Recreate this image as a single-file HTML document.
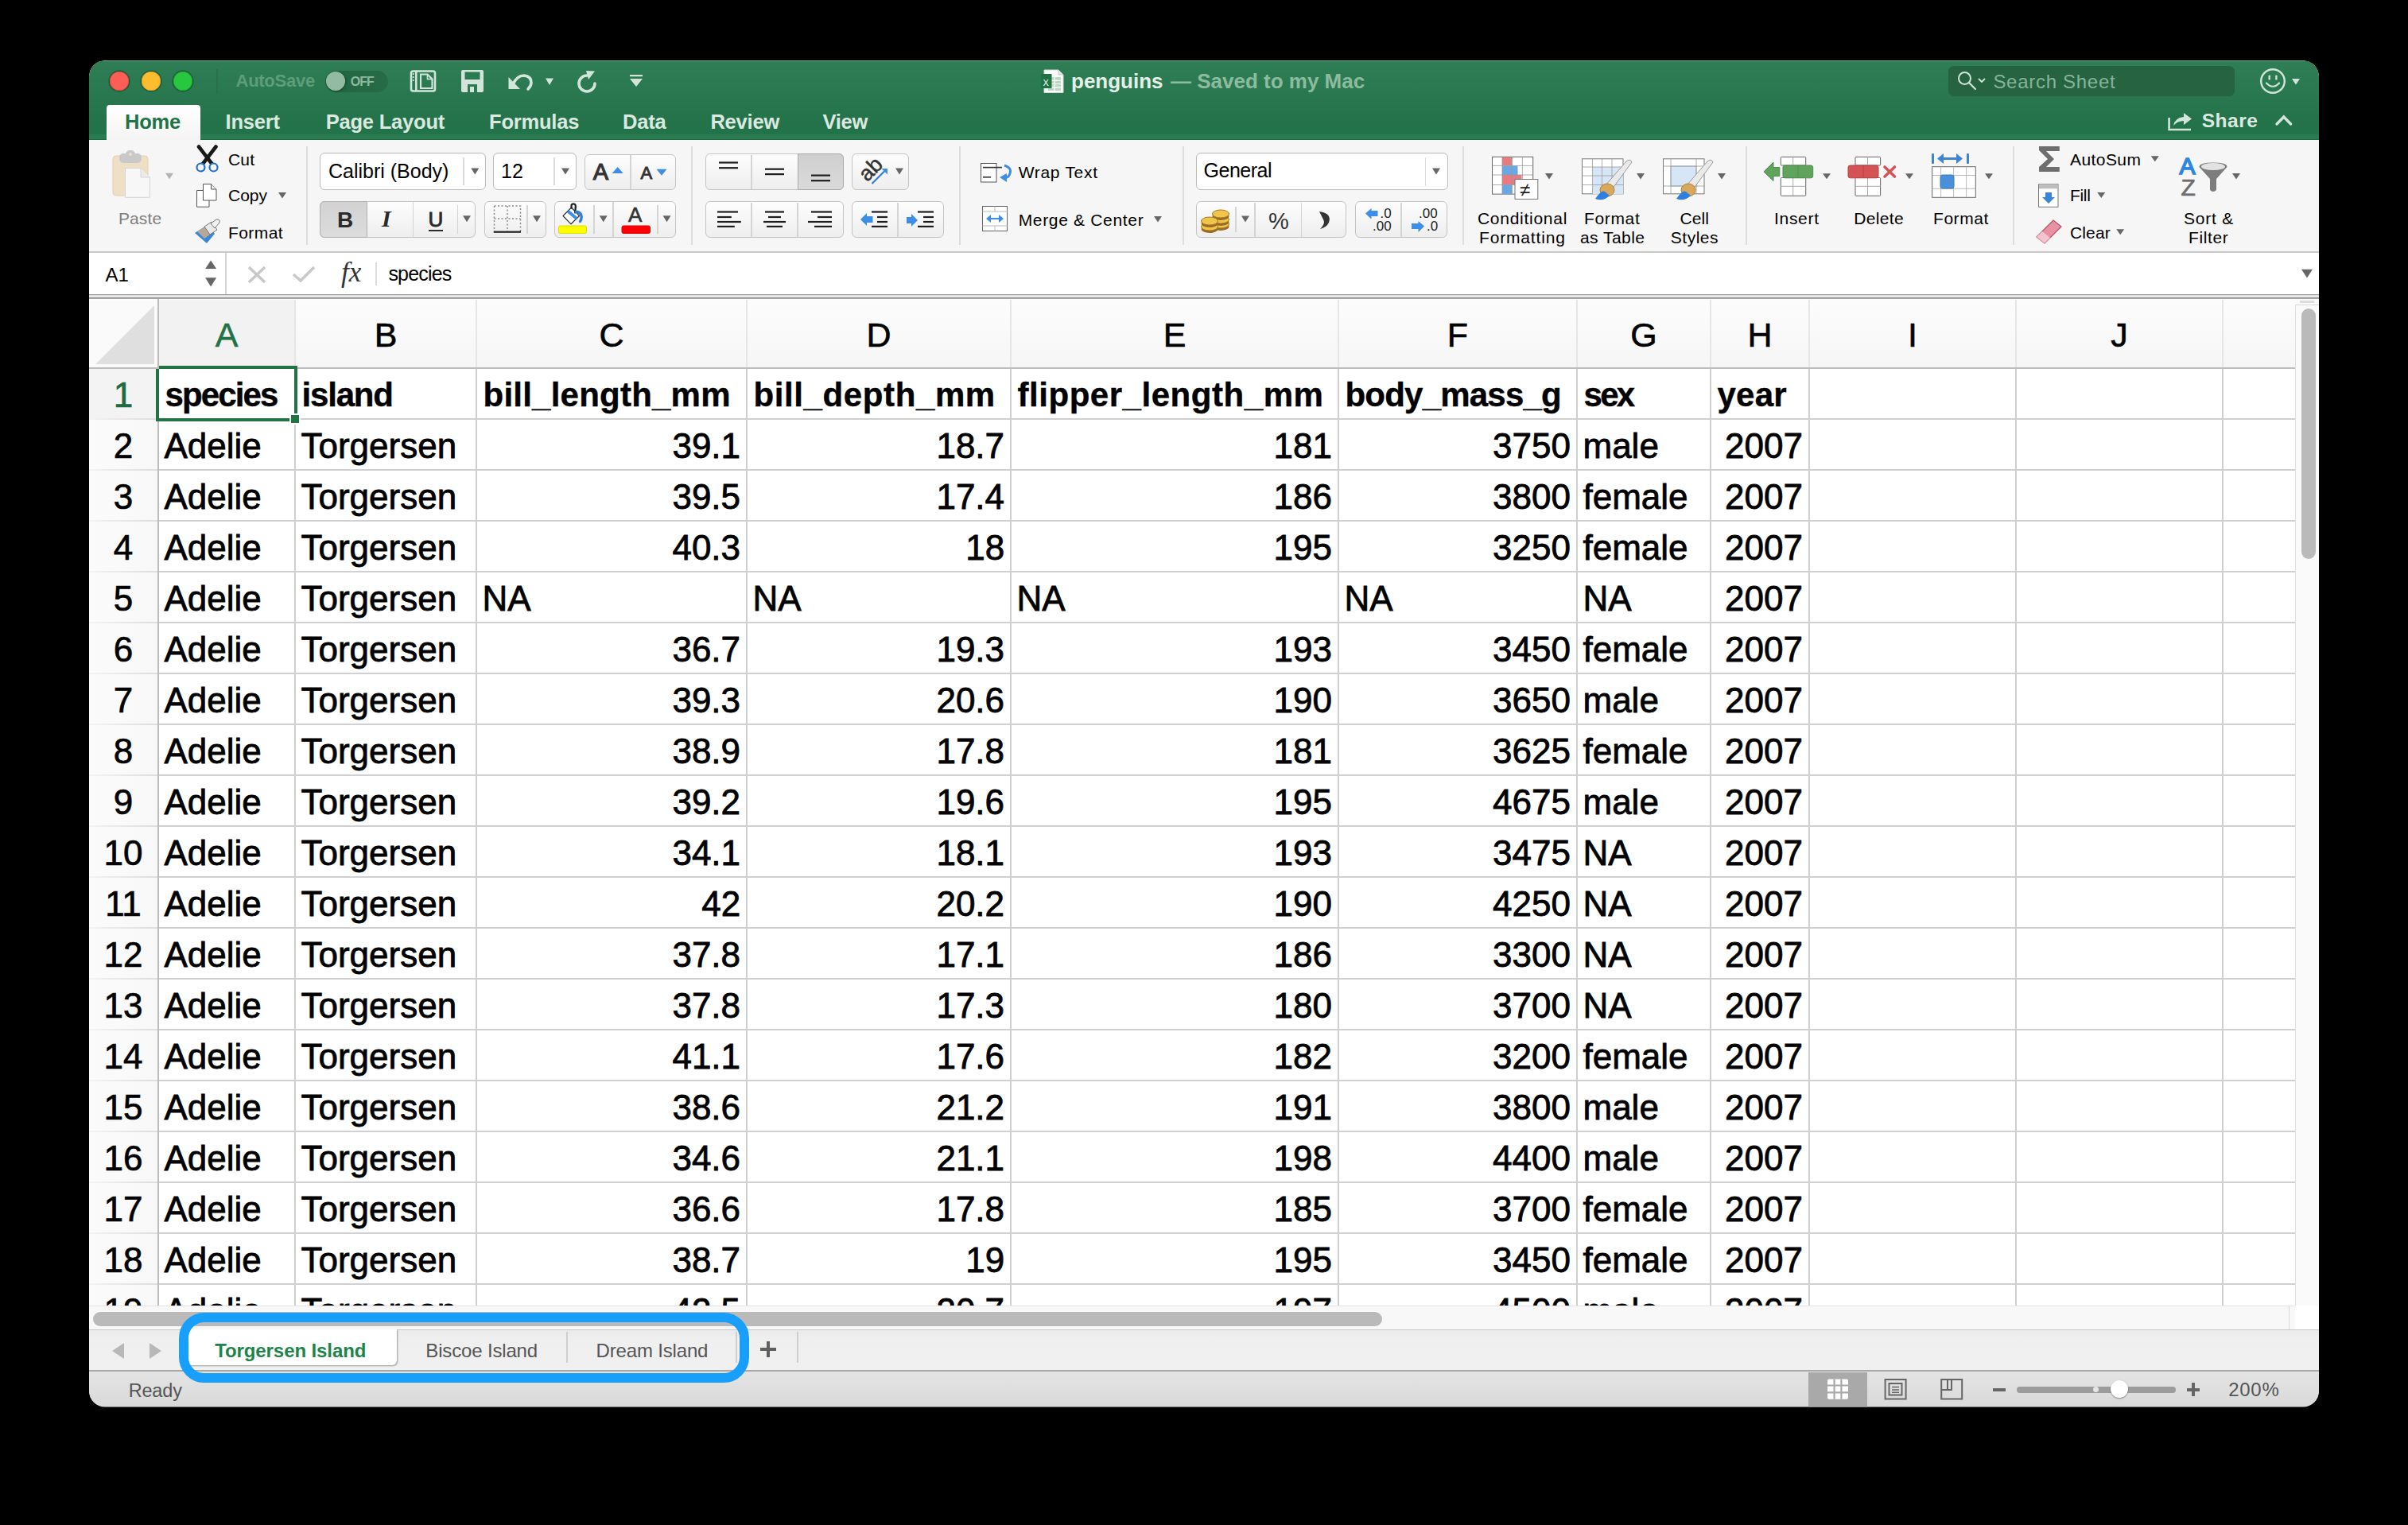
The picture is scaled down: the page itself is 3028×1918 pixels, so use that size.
<!DOCTYPE html>
<html><head><meta charset="utf-8"><style>
html,body{margin:0;padding:0;background:#000;}
body{width:3028px;height:1918px;position:relative;overflow:hidden;font-family:"Liberation Sans",sans-serif;}
#page{position:absolute;left:0;top:0;width:3028px;height:1918px;clip-path:inset(76px 112px 148.5px 112px round 20px);}
#page div,#page svg{position:absolute;white-space:nowrap;}
</style></head><body><div id="page">
<div id="win" style="left:112px;top:76px;width:2804px;height:1693px;border-radius:20px;overflow:hidden;background:#fff;"></div>
<div style="left:112px;top:76px;width:2804px;height:100px;background:linear-gradient(#2f7e55,#2a7850 40%,#24734a 70%,#22724a);border-radius:20px 20px 0 0;"></div>
<div style="left:112px;top:169px;width:2804px;height:6px;background:#2b7b50;"></div>
<div style="left:130px;top:76px;width:2768px;height:1px;background:rgba(170,215,190,0.55);"></div>
<div style="left:112px;top:175px;width:2804px;height:1px;background:#1f6a42;"></div>
<div style="left:138px;top:90px;width:24px;height:24px;border-radius:50%;background:#fd5f57;box-shadow:0 0 0 0.8px #d9443c inset, 0 0 0 1.6px rgba(20,70,45,0.6);"></div>
<div style="left:178px;top:90px;width:24px;height:24px;border-radius:50%;background:#febc2e;box-shadow:0 0 0 0.8px #d9a020 inset, 0 0 0 1.6px rgba(20,70,45,0.6);"></div>
<div style="left:218px;top:90px;width:24px;height:24px;border-radius:50%;background:#27c83f;box-shadow:0 0 0 0.8px #1ea532 inset, 0 0 0 1.6px rgba(20,70,45,0.6);"></div>
<div style="left:272px;top:87px;width:2px;height:31px;background:#2a6f49;"></div>
<div style="top:90.09px;font-size:22px;line-height:24.57px;color:#5f9d7a;font-weight:700;letter-spacing:-0.26px;left:296.50px;">AutoSave</div>
<div style="left:408.5px;top:88.5px;width:79.5px;height:27px;border-radius:14px;background:linear-gradient(90deg,#22643f,#276b47);"></div>
<div style="left:409.6px;top:89.7px;width:24.4px;height:24.4px;border-radius:50%;background:#93bba3;box-shadow:1px 1px 3px rgba(0,0,0,0.3);"></div>
<div style="top:93.62px;font-size:16px;line-height:17.87px;color:#8fb9a0;font-weight:700;letter-spacing:-0.9px;left:440.70px;">OFF</div>
<div style="left:134px;top:132px;width:118px;height:44px;border-radius:4px 4px 0 0;background:linear-gradient(#ffffff,#f4f4f4);"></div>
<div style="top:138.92px;font-size:25.5px;line-height:28.48px;color:#217346;font-weight:700;letter-spacing:-0.2px;left:157.00px;">Home</div>
<div style="top:138.92px;font-size:25.5px;line-height:28.48px;color:#dce9e1;font-weight:700;letter-spacing:-0.2px;left:283.50px;">Insert</div>
<div style="top:138.92px;font-size:25.5px;line-height:28.48px;color:#dce9e1;font-weight:700;letter-spacing:-0.2px;left:409.70px;">Page Layout</div>
<div style="top:138.92px;font-size:25.5px;line-height:28.48px;color:#dce9e1;font-weight:700;letter-spacing:-0.2px;left:615.00px;">Formulas</div>
<div style="top:138.92px;font-size:25.5px;line-height:28.48px;color:#dce9e1;font-weight:700;letter-spacing:-0.2px;left:783.00px;">Data</div>
<div style="top:138.92px;font-size:25.5px;line-height:28.48px;color:#dce9e1;font-weight:700;letter-spacing:-0.2px;left:893.40px;">Review</div>
<div style="top:138.92px;font-size:25.5px;line-height:28.48px;color:#dce9e1;font-weight:700;letter-spacing:-0.2px;left:1034.40px;">View</div>
<div style="top:88.47px;font-size:26px;line-height:29.04px;color:#e3efe8;font-weight:700;left:1347.00px;">penguins</div>
<div style="top:88.47px;font-size:26px;line-height:29.04px;color:#8dbb9f;font-weight:700;left:1472.00px;">— Saved to my Mac</div>
<div style="left:2450px;top:83px;width:360px;height:37.5px;border-radius:7px;background:#256341;"></div>
<div style="top:90.08px;font-size:24px;line-height:26.81px;color:#86b49a;font-weight:400;letter-spacing:0.71px;left:2506.40px;">Search Sheet</div>
<div style="top:138.23px;font-size:24.5px;line-height:27.37px;color:#dce9e1;font-weight:700;letter-spacing:0.55px;left:2768.70px;">Share</div>
<div style="left:112px;top:176px;width:2804px;height:140px;background:#f6f6f6;"></div>
<div style="left:112px;top:316px;width:2804px;height:2px;background:#c9c9c9;"></div>
<div style="left:384.5px;top:184px;width:2.0px;height:123.5px;background:#dddddd;"></div>
<div style="left:868.5px;top:184px;width:2.0px;height:123.5px;background:#dddddd;"></div>
<div style="left:1205.5px;top:184px;width:2.0px;height:123.5px;background:#dddddd;"></div>
<div style="left:1486.5px;top:184px;width:2.0px;height:123.5px;background:#dddddd;"></div>
<div style="left:1838.5px;top:184px;width:2.0px;height:123.5px;background:#dddddd;"></div>
<div style="left:2194.5px;top:184px;width:2.0px;height:123.5px;background:#dddddd;"></div>
<div style="left:2530.5px;top:184px;width:2.0px;height:123.5px;background:#dddddd;"></div>
<div style="left:112px;top:318px;width:2804px;height:52px;background:#ffffff;"></div>
<div style="left:283px;top:318px;width:2px;height:52px;background:#d4d4d4;"></div>
<div style="left:112px;top:370px;width:2804px;height:1px;background:#a0a0a0;"></div>
<div style="left:112px;top:371px;width:2804px;height:1px;background:#d8d8d8;"></div>
<div style="left:112px;top:373px;width:2804px;height:1px;background:#d0d0d0;"></div>
<div style="left:112px;top:374px;width:2804px;height:2px;background:#a4a4a4;"></div>
<div style="top:333.28px;font-size:24px;line-height:26.81px;color:#000;font-weight:400;left:132.50px;">A1</div>
<div style="top:331.18px;font-size:25px;line-height:27.93px;color:#000;font-weight:400;letter-spacing:-0.81px;left:488.40px;">species</div>
<div style="left:112px;top:376px;width:2774px;height:86px;background:linear-gradient(#fcfcfc,#f6f6f6);"></div>
<div style="left:200px;top:377px;width:170px;height:85px;background:#f2f2f2;"></div>
<div style="left:112px;top:462px;width:2774px;height:2px;background:#bcbcbc;"></div>
<div style="left:112px;top:377px;width:86px;height:85px;background:#fafafa;"></div>
<svg style="left:120px;top:384px;" width="75" height="75"><polygon points="0,74 74,0 74,74" fill="#dfdfdf"/></svg>
<div style="left:198px;top:376px;width:2px;height:88px;background:#bcbcbc;"></div>
<div style="left:370px;top:377px;width:2px;height:85px;background:#e6e6e6;"></div>
<div style="left:598px;top:377px;width:2px;height:85px;background:#e6e6e6;"></div>
<div style="left:938px;top:377px;width:2px;height:85px;background:#e6e6e6;"></div>
<div style="left:1270px;top:377px;width:2px;height:85px;background:#e6e6e6;"></div>
<div style="left:1682px;top:377px;width:2px;height:85px;background:#e6e6e6;"></div>
<div style="left:1982px;top:377px;width:2px;height:85px;background:#e6e6e6;"></div>
<div style="left:2150px;top:377px;width:2px;height:85px;background:#e6e6e6;"></div>
<div style="left:2274px;top:377px;width:2px;height:85px;background:#e6e6e6;"></div>
<div style="left:2534px;top:377px;width:2px;height:85px;background:#e6e6e6;"></div>
<div style="left:2794px;top:377px;width:2px;height:85px;background:#e6e6e6;"></div>
<div style="top:396.58px;font-size:43px;line-height:48.03px;color:#217346;font-weight:400;left:-715.00px;width:2000px;text-align:center;-webkit-text-stroke:0.6px #217346;">A</div>
<div style="top:396.58px;font-size:43px;line-height:48.03px;color:#000;font-weight:400;left:-515.00px;width:2000px;text-align:center;-webkit-text-stroke:0.6px #000;">B</div>
<div style="top:396.58px;font-size:43px;line-height:48.03px;color:#000;font-weight:400;left:-231.00px;width:2000px;text-align:center;-webkit-text-stroke:0.6px #000;">C</div>
<div style="top:396.58px;font-size:43px;line-height:48.03px;color:#000;font-weight:400;left:105.00px;width:2000px;text-align:center;-webkit-text-stroke:0.6px #000;">D</div>
<div style="top:396.58px;font-size:43px;line-height:48.03px;color:#000;font-weight:400;left:477.00px;width:2000px;text-align:center;-webkit-text-stroke:0.6px #000;">E</div>
<div style="top:396.58px;font-size:43px;line-height:48.03px;color:#000;font-weight:400;left:833.00px;width:2000px;text-align:center;-webkit-text-stroke:0.6px #000;">F</div>
<div style="top:396.58px;font-size:43px;line-height:48.03px;color:#000;font-weight:400;left:1067.00px;width:2000px;text-align:center;-webkit-text-stroke:0.6px #000;">G</div>
<div style="top:396.58px;font-size:43px;line-height:48.03px;color:#000;font-weight:400;left:1213.00px;width:2000px;text-align:center;-webkit-text-stroke:0.6px #000;">H</div>
<div style="top:396.58px;font-size:43px;line-height:48.03px;color:#000;font-weight:400;left:1405.00px;width:2000px;text-align:center;-webkit-text-stroke:0.6px #000;">I</div>
<div style="top:396.58px;font-size:43px;line-height:48.03px;color:#000;font-weight:400;left:1665.00px;width:2000px;text-align:center;-webkit-text-stroke:0.6px #000;">J</div>
<div style="left:112px;top:464px;width:86px;height:1178px;background:linear-gradient(90deg,#fbfbfb,#f8f8f8);"></div>
<div style="left:198px;top:464px;width:2px;height:1178px;background:#bcbcbc;"></div>
<div style="left:112px;top:464px;width:86px;height:62px;background:#f3f3f3;"></div>
<div style="left:200px;top:464px;width:2686px;height:1178px;background:#ffffff;"></div>
<div style="left:370px;top:464px;width:2px;height:1178px;background:#d0d0d0;"></div>
<div style="left:598px;top:464px;width:2px;height:1178px;background:#d0d0d0;"></div>
<div style="left:938px;top:464px;width:2px;height:1178px;background:#d0d0d0;"></div>
<div style="left:1270px;top:464px;width:2px;height:1178px;background:#d0d0d0;"></div>
<div style="left:1682px;top:464px;width:2px;height:1178px;background:#d0d0d0;"></div>
<div style="left:1982px;top:464px;width:2px;height:1178px;background:#d0d0d0;"></div>
<div style="left:2150px;top:464px;width:2px;height:1178px;background:#d0d0d0;"></div>
<div style="left:2274px;top:464px;width:2px;height:1178px;background:#d0d0d0;"></div>
<div style="left:2534px;top:464px;width:2px;height:1178px;background:#d0d0d0;"></div>
<div style="left:2794px;top:464px;width:2px;height:1178px;background:#d0d0d0;"></div>
<div style="left:200px;top:526px;width:2686px;height:2px;background:#d0d0d0;"></div>
<div style="left:112px;top:526px;width:86px;height:2px;background:linear-gradient(90deg,rgba(225,225,225,0.3),#dddddd);"></div>
<div style="left:200px;top:590px;width:2686px;height:2px;background:#d0d0d0;"></div>
<div style="left:112px;top:590px;width:86px;height:2px;background:linear-gradient(90deg,rgba(225,225,225,0.3),#dddddd);"></div>
<div style="left:200px;top:654px;width:2686px;height:2px;background:#d0d0d0;"></div>
<div style="left:112px;top:654px;width:86px;height:2px;background:linear-gradient(90deg,rgba(225,225,225,0.3),#dddddd);"></div>
<div style="left:200px;top:718px;width:2686px;height:2px;background:#d0d0d0;"></div>
<div style="left:112px;top:718px;width:86px;height:2px;background:linear-gradient(90deg,rgba(225,225,225,0.3),#dddddd);"></div>
<div style="left:200px;top:782px;width:2686px;height:2px;background:#d0d0d0;"></div>
<div style="left:112px;top:782px;width:86px;height:2px;background:linear-gradient(90deg,rgba(225,225,225,0.3),#dddddd);"></div>
<div style="left:200px;top:846px;width:2686px;height:2px;background:#d0d0d0;"></div>
<div style="left:112px;top:846px;width:86px;height:2px;background:linear-gradient(90deg,rgba(225,225,225,0.3),#dddddd);"></div>
<div style="left:200px;top:910px;width:2686px;height:2px;background:#d0d0d0;"></div>
<div style="left:112px;top:910px;width:86px;height:2px;background:linear-gradient(90deg,rgba(225,225,225,0.3),#dddddd);"></div>
<div style="left:200px;top:974px;width:2686px;height:2px;background:#d0d0d0;"></div>
<div style="left:112px;top:974px;width:86px;height:2px;background:linear-gradient(90deg,rgba(225,225,225,0.3),#dddddd);"></div>
<div style="left:200px;top:1038px;width:2686px;height:2px;background:#d0d0d0;"></div>
<div style="left:112px;top:1038px;width:86px;height:2px;background:linear-gradient(90deg,rgba(225,225,225,0.3),#dddddd);"></div>
<div style="left:200px;top:1102px;width:2686px;height:2px;background:#d0d0d0;"></div>
<div style="left:112px;top:1102px;width:86px;height:2px;background:linear-gradient(90deg,rgba(225,225,225,0.3),#dddddd);"></div>
<div style="left:200px;top:1166px;width:2686px;height:2px;background:#d0d0d0;"></div>
<div style="left:112px;top:1166px;width:86px;height:2px;background:linear-gradient(90deg,rgba(225,225,225,0.3),#dddddd);"></div>
<div style="left:200px;top:1230px;width:2686px;height:2px;background:#d0d0d0;"></div>
<div style="left:112px;top:1230px;width:86px;height:2px;background:linear-gradient(90deg,rgba(225,225,225,0.3),#dddddd);"></div>
<div style="left:200px;top:1294px;width:2686px;height:2px;background:#d0d0d0;"></div>
<div style="left:112px;top:1294px;width:86px;height:2px;background:linear-gradient(90deg,rgba(225,225,225,0.3),#dddddd);"></div>
<div style="left:200px;top:1358px;width:2686px;height:2px;background:#d0d0d0;"></div>
<div style="left:112px;top:1358px;width:86px;height:2px;background:linear-gradient(90deg,rgba(225,225,225,0.3),#dddddd);"></div>
<div style="left:200px;top:1422px;width:2686px;height:2px;background:#d0d0d0;"></div>
<div style="left:112px;top:1422px;width:86px;height:2px;background:linear-gradient(90deg,rgba(225,225,225,0.3),#dddddd);"></div>
<div style="left:200px;top:1486px;width:2686px;height:2px;background:#d0d0d0;"></div>
<div style="left:112px;top:1486px;width:86px;height:2px;background:linear-gradient(90deg,rgba(225,225,225,0.3),#dddddd);"></div>
<div style="left:200px;top:1550px;width:2686px;height:2px;background:#d0d0d0;"></div>
<div style="left:112px;top:1550px;width:86px;height:2px;background:linear-gradient(90deg,rgba(225,225,225,0.3),#dddddd);"></div>
<div style="left:200px;top:1614px;width:2686px;height:2px;background:#d0d0d0;"></div>
<div style="left:112px;top:1614px;width:86px;height:2px;background:linear-gradient(90deg,rgba(225,225,225,0.3),#dddddd);"></div>
<div style="left:112px;top:464px;width:2774px;height:1178px;overflow:hidden;">
<div style="top:8.18px;font-size:44px;line-height:49.15px;color:#1e6b40;font-weight:400;left:-957.00px;width:2000px;text-align:center;-webkit-text-stroke:0.7px #1e6b40;">1</div>
<div style="top:9.99px;font-size:42px;line-height:46.91px;color:#000;font-weight:700;letter-spacing:-1.87px;left:95.50px;-webkit-text-stroke:0.4px #000;">species</div>
<div style="top:9.99px;font-size:42px;line-height:46.91px;color:#000;font-weight:700;letter-spacing:-1.18px;left:267.50px;-webkit-text-stroke:0.4px #000;">island</div>
<div style="top:9.99px;font-size:42px;line-height:46.91px;color:#000;font-weight:700;letter-spacing:0.23px;left:495.50px;-webkit-text-stroke:0.4px #000;">bill_length_mm</div>
<div style="top:9.99px;font-size:42px;line-height:46.91px;color:#000;font-weight:700;letter-spacing:0.61px;left:835.50px;-webkit-text-stroke:0.4px #000;">bill_depth_mm</div>
<div style="top:9.99px;font-size:42px;line-height:46.91px;color:#000;font-weight:700;letter-spacing:0.54px;left:1167.50px;-webkit-text-stroke:0.4px #000;">flipper_length_mm</div>
<div style="top:9.99px;font-size:42px;line-height:46.91px;color:#000;font-weight:700;letter-spacing:-0.79px;left:1579.50px;-webkit-text-stroke:0.4px #000;">body_mass_g</div>
<div style="top:9.99px;font-size:42px;line-height:46.91px;color:#000;font-weight:700;letter-spacing:-2.72px;left:1879.50px;-webkit-text-stroke:0.4px #000;">sex</div>
<div style="top:9.99px;font-size:42px;line-height:46.91px;color:#000;font-weight:700;letter-spacing:0.23px;left:2047.50px;-webkit-text-stroke:0.4px #000;">year</div>
<div style="top:72.18px;font-size:44px;line-height:49.15px;color:#000;font-weight:400;left:-957.00px;width:2000px;text-align:center;-webkit-text-stroke:0.7px #000;">2</div>
<div style="top:72.18px;font-size:44px;line-height:49.15px;color:#000;font-weight:400;left:94.50px;-webkit-text-stroke:0.8px #000;">Adelie</div>
<div style="top:72.18px;font-size:44px;line-height:49.15px;color:#000;font-weight:400;left:266.50px;-webkit-text-stroke:0.8px #000;">Torgersen</div>
<div style="top:72.18px;font-size:44px;line-height:49.15px;color:#000;font-weight:400;right:1954.94px;text-align:right;-webkit-text-stroke:0.8px #000;">39.1</div>
<div style="top:72.18px;font-size:44px;line-height:49.15px;color:#000;font-weight:400;right:1622.94px;text-align:right;-webkit-text-stroke:0.8px #000;">18.7</div>
<div style="top:72.18px;font-size:44px;line-height:49.15px;color:#000;font-weight:400;right:1211.07px;text-align:right;-webkit-text-stroke:0.8px #000;">181</div>
<div style="top:72.18px;font-size:44px;line-height:49.15px;color:#000;font-weight:400;right:911.01px;text-align:right;-webkit-text-stroke:0.8px #000;">3750</div>
<div style="top:72.18px;font-size:44px;line-height:49.15px;color:#000;font-weight:400;left:1878.50px;-webkit-text-stroke:0.8px #000;">male</div>
<div style="top:72.18px;font-size:44px;line-height:49.15px;color:#000;font-weight:400;right:619.01px;text-align:right;-webkit-text-stroke:0.8px #000;">2007</div>
<div style="top:136.18px;font-size:44px;line-height:49.15px;color:#000;font-weight:400;left:-957.00px;width:2000px;text-align:center;-webkit-text-stroke:0.7px #000;">3</div>
<div style="top:136.18px;font-size:44px;line-height:49.15px;color:#000;font-weight:400;left:94.50px;-webkit-text-stroke:0.8px #000;">Adelie</div>
<div style="top:136.18px;font-size:44px;line-height:49.15px;color:#000;font-weight:400;left:266.50px;-webkit-text-stroke:0.8px #000;">Torgersen</div>
<div style="top:136.18px;font-size:44px;line-height:49.15px;color:#000;font-weight:400;right:1954.94px;text-align:right;-webkit-text-stroke:0.8px #000;">39.5</div>
<div style="top:136.18px;font-size:44px;line-height:49.15px;color:#000;font-weight:400;right:1622.94px;text-align:right;-webkit-text-stroke:0.8px #000;">17.4</div>
<div style="top:136.18px;font-size:44px;line-height:49.15px;color:#000;font-weight:400;right:1211.07px;text-align:right;-webkit-text-stroke:0.8px #000;">186</div>
<div style="top:136.18px;font-size:44px;line-height:49.15px;color:#000;font-weight:400;right:911.01px;text-align:right;-webkit-text-stroke:0.8px #000;">3800</div>
<div style="top:136.18px;font-size:44px;line-height:49.15px;color:#000;font-weight:400;left:1878.50px;-webkit-text-stroke:0.8px #000;">female</div>
<div style="top:136.18px;font-size:44px;line-height:49.15px;color:#000;font-weight:400;right:619.01px;text-align:right;-webkit-text-stroke:0.8px #000;">2007</div>
<div style="top:200.18px;font-size:44px;line-height:49.15px;color:#000;font-weight:400;left:-957.00px;width:2000px;text-align:center;-webkit-text-stroke:0.7px #000;">4</div>
<div style="top:200.18px;font-size:44px;line-height:49.15px;color:#000;font-weight:400;left:94.50px;-webkit-text-stroke:0.8px #000;">Adelie</div>
<div style="top:200.18px;font-size:44px;line-height:49.15px;color:#000;font-weight:400;left:266.50px;-webkit-text-stroke:0.8px #000;">Torgersen</div>
<div style="top:200.18px;font-size:44px;line-height:49.15px;color:#000;font-weight:400;right:1954.94px;text-align:right;-webkit-text-stroke:0.8px #000;">40.3</div>
<div style="top:200.18px;font-size:44px;line-height:49.15px;color:#000;font-weight:400;right:1622.90px;text-align:right;-webkit-text-stroke:0.8px #000;">18</div>
<div style="top:200.18px;font-size:44px;line-height:49.15px;color:#000;font-weight:400;right:1211.07px;text-align:right;-webkit-text-stroke:0.8px #000;">195</div>
<div style="top:200.18px;font-size:44px;line-height:49.15px;color:#000;font-weight:400;right:911.01px;text-align:right;-webkit-text-stroke:0.8px #000;">3250</div>
<div style="top:200.18px;font-size:44px;line-height:49.15px;color:#000;font-weight:400;left:1878.50px;-webkit-text-stroke:0.8px #000;">female</div>
<div style="top:200.18px;font-size:44px;line-height:49.15px;color:#000;font-weight:400;right:619.01px;text-align:right;-webkit-text-stroke:0.8px #000;">2007</div>
<div style="top:264.18px;font-size:44px;line-height:49.15px;color:#000;font-weight:400;left:-957.00px;width:2000px;text-align:center;-webkit-text-stroke:0.7px #000;">5</div>
<div style="top:264.18px;font-size:44px;line-height:49.15px;color:#000;font-weight:400;left:94.50px;-webkit-text-stroke:0.8px #000;">Adelie</div>
<div style="top:264.18px;font-size:44px;line-height:49.15px;color:#000;font-weight:400;left:266.50px;-webkit-text-stroke:0.8px #000;">Torgersen</div>
<div style="top:264.18px;font-size:44px;line-height:49.15px;color:#000;font-weight:400;left:494.50px;-webkit-text-stroke:0.8px #000;">NA</div>
<div style="top:264.18px;font-size:44px;line-height:49.15px;color:#000;font-weight:400;left:834.50px;-webkit-text-stroke:0.8px #000;">NA</div>
<div style="top:264.18px;font-size:44px;line-height:49.15px;color:#000;font-weight:400;left:1166.50px;-webkit-text-stroke:0.8px #000;">NA</div>
<div style="top:264.18px;font-size:44px;line-height:49.15px;color:#000;font-weight:400;left:1578.50px;-webkit-text-stroke:0.8px #000;">NA</div>
<div style="top:264.18px;font-size:44px;line-height:49.15px;color:#000;font-weight:400;left:1878.50px;-webkit-text-stroke:0.8px #000;">NA</div>
<div style="top:264.18px;font-size:44px;line-height:49.15px;color:#000;font-weight:400;right:619.01px;text-align:right;-webkit-text-stroke:0.8px #000;">2007</div>
<div style="top:328.18px;font-size:44px;line-height:49.15px;color:#000;font-weight:400;left:-957.00px;width:2000px;text-align:center;-webkit-text-stroke:0.7px #000;">6</div>
<div style="top:328.18px;font-size:44px;line-height:49.15px;color:#000;font-weight:400;left:94.50px;-webkit-text-stroke:0.8px #000;">Adelie</div>
<div style="top:328.18px;font-size:44px;line-height:49.15px;color:#000;font-weight:400;left:266.50px;-webkit-text-stroke:0.8px #000;">Torgersen</div>
<div style="top:328.18px;font-size:44px;line-height:49.15px;color:#000;font-weight:400;right:1954.94px;text-align:right;-webkit-text-stroke:0.8px #000;">36.7</div>
<div style="top:328.18px;font-size:44px;line-height:49.15px;color:#000;font-weight:400;right:1622.94px;text-align:right;-webkit-text-stroke:0.8px #000;">19.3</div>
<div style="top:328.18px;font-size:44px;line-height:49.15px;color:#000;font-weight:400;right:1211.07px;text-align:right;-webkit-text-stroke:0.8px #000;">193</div>
<div style="top:328.18px;font-size:44px;line-height:49.15px;color:#000;font-weight:400;right:911.01px;text-align:right;-webkit-text-stroke:0.8px #000;">3450</div>
<div style="top:328.18px;font-size:44px;line-height:49.15px;color:#000;font-weight:400;left:1878.50px;-webkit-text-stroke:0.8px #000;">female</div>
<div style="top:328.18px;font-size:44px;line-height:49.15px;color:#000;font-weight:400;right:619.01px;text-align:right;-webkit-text-stroke:0.8px #000;">2007</div>
<div style="top:392.18px;font-size:44px;line-height:49.15px;color:#000;font-weight:400;left:-957.00px;width:2000px;text-align:center;-webkit-text-stroke:0.7px #000;">7</div>
<div style="top:392.18px;font-size:44px;line-height:49.15px;color:#000;font-weight:400;left:94.50px;-webkit-text-stroke:0.8px #000;">Adelie</div>
<div style="top:392.18px;font-size:44px;line-height:49.15px;color:#000;font-weight:400;left:266.50px;-webkit-text-stroke:0.8px #000;">Torgersen</div>
<div style="top:392.18px;font-size:44px;line-height:49.15px;color:#000;font-weight:400;right:1954.94px;text-align:right;-webkit-text-stroke:0.8px #000;">39.3</div>
<div style="top:392.18px;font-size:44px;line-height:49.15px;color:#000;font-weight:400;right:1622.94px;text-align:right;-webkit-text-stroke:0.8px #000;">20.6</div>
<div style="top:392.18px;font-size:44px;line-height:49.15px;color:#000;font-weight:400;right:1211.07px;text-align:right;-webkit-text-stroke:0.8px #000;">190</div>
<div style="top:392.18px;font-size:44px;line-height:49.15px;color:#000;font-weight:400;right:911.01px;text-align:right;-webkit-text-stroke:0.8px #000;">3650</div>
<div style="top:392.18px;font-size:44px;line-height:49.15px;color:#000;font-weight:400;left:1878.50px;-webkit-text-stroke:0.8px #000;">male</div>
<div style="top:392.18px;font-size:44px;line-height:49.15px;color:#000;font-weight:400;right:619.01px;text-align:right;-webkit-text-stroke:0.8px #000;">2007</div>
<div style="top:456.18px;font-size:44px;line-height:49.15px;color:#000;font-weight:400;left:-957.00px;width:2000px;text-align:center;-webkit-text-stroke:0.7px #000;">8</div>
<div style="top:456.18px;font-size:44px;line-height:49.15px;color:#000;font-weight:400;left:94.50px;-webkit-text-stroke:0.8px #000;">Adelie</div>
<div style="top:456.18px;font-size:44px;line-height:49.15px;color:#000;font-weight:400;left:266.50px;-webkit-text-stroke:0.8px #000;">Torgersen</div>
<div style="top:456.18px;font-size:44px;line-height:49.15px;color:#000;font-weight:400;right:1954.94px;text-align:right;-webkit-text-stroke:0.8px #000;">38.9</div>
<div style="top:456.18px;font-size:44px;line-height:49.15px;color:#000;font-weight:400;right:1622.94px;text-align:right;-webkit-text-stroke:0.8px #000;">17.8</div>
<div style="top:456.18px;font-size:44px;line-height:49.15px;color:#000;font-weight:400;right:1211.07px;text-align:right;-webkit-text-stroke:0.8px #000;">181</div>
<div style="top:456.18px;font-size:44px;line-height:49.15px;color:#000;font-weight:400;right:911.01px;text-align:right;-webkit-text-stroke:0.8px #000;">3625</div>
<div style="top:456.18px;font-size:44px;line-height:49.15px;color:#000;font-weight:400;left:1878.50px;-webkit-text-stroke:0.8px #000;">female</div>
<div style="top:456.18px;font-size:44px;line-height:49.15px;color:#000;font-weight:400;right:619.01px;text-align:right;-webkit-text-stroke:0.8px #000;">2007</div>
<div style="top:520.18px;font-size:44px;line-height:49.15px;color:#000;font-weight:400;left:-957.00px;width:2000px;text-align:center;-webkit-text-stroke:0.7px #000;">9</div>
<div style="top:520.18px;font-size:44px;line-height:49.15px;color:#000;font-weight:400;left:94.50px;-webkit-text-stroke:0.8px #000;">Adelie</div>
<div style="top:520.18px;font-size:44px;line-height:49.15px;color:#000;font-weight:400;left:266.50px;-webkit-text-stroke:0.8px #000;">Torgersen</div>
<div style="top:520.18px;font-size:44px;line-height:49.15px;color:#000;font-weight:400;right:1954.94px;text-align:right;-webkit-text-stroke:0.8px #000;">39.2</div>
<div style="top:520.18px;font-size:44px;line-height:49.15px;color:#000;font-weight:400;right:1622.94px;text-align:right;-webkit-text-stroke:0.8px #000;">19.6</div>
<div style="top:520.18px;font-size:44px;line-height:49.15px;color:#000;font-weight:400;right:1211.07px;text-align:right;-webkit-text-stroke:0.8px #000;">195</div>
<div style="top:520.18px;font-size:44px;line-height:49.15px;color:#000;font-weight:400;right:911.01px;text-align:right;-webkit-text-stroke:0.8px #000;">4675</div>
<div style="top:520.18px;font-size:44px;line-height:49.15px;color:#000;font-weight:400;left:1878.50px;-webkit-text-stroke:0.8px #000;">male</div>
<div style="top:520.18px;font-size:44px;line-height:49.15px;color:#000;font-weight:400;right:619.01px;text-align:right;-webkit-text-stroke:0.8px #000;">2007</div>
<div style="top:584.18px;font-size:44px;line-height:49.15px;color:#000;font-weight:400;left:-957.00px;width:2000px;text-align:center;-webkit-text-stroke:0.7px #000;">10</div>
<div style="top:584.18px;font-size:44px;line-height:49.15px;color:#000;font-weight:400;left:94.50px;-webkit-text-stroke:0.8px #000;">Adelie</div>
<div style="top:584.18px;font-size:44px;line-height:49.15px;color:#000;font-weight:400;left:266.50px;-webkit-text-stroke:0.8px #000;">Torgersen</div>
<div style="top:584.18px;font-size:44px;line-height:49.15px;color:#000;font-weight:400;right:1954.94px;text-align:right;-webkit-text-stroke:0.8px #000;">34.1</div>
<div style="top:584.18px;font-size:44px;line-height:49.15px;color:#000;font-weight:400;right:1622.94px;text-align:right;-webkit-text-stroke:0.8px #000;">18.1</div>
<div style="top:584.18px;font-size:44px;line-height:49.15px;color:#000;font-weight:400;right:1211.07px;text-align:right;-webkit-text-stroke:0.8px #000;">193</div>
<div style="top:584.18px;font-size:44px;line-height:49.15px;color:#000;font-weight:400;right:911.01px;text-align:right;-webkit-text-stroke:0.8px #000;">3475</div>
<div style="top:584.18px;font-size:44px;line-height:49.15px;color:#000;font-weight:400;left:1878.50px;-webkit-text-stroke:0.8px #000;">NA</div>
<div style="top:584.18px;font-size:44px;line-height:49.15px;color:#000;font-weight:400;right:619.01px;text-align:right;-webkit-text-stroke:0.8px #000;">2007</div>
<div style="top:648.18px;font-size:44px;line-height:49.15px;color:#000;font-weight:400;left:-957.00px;width:2000px;text-align:center;-webkit-text-stroke:0.7px #000;">11</div>
<div style="top:648.18px;font-size:44px;line-height:49.15px;color:#000;font-weight:400;left:94.50px;-webkit-text-stroke:0.8px #000;">Adelie</div>
<div style="top:648.18px;font-size:44px;line-height:49.15px;color:#000;font-weight:400;left:266.50px;-webkit-text-stroke:0.8px #000;">Torgersen</div>
<div style="top:648.18px;font-size:44px;line-height:49.15px;color:#000;font-weight:400;right:1954.90px;text-align:right;-webkit-text-stroke:0.8px #000;">42</div>
<div style="top:648.18px;font-size:44px;line-height:49.15px;color:#000;font-weight:400;right:1622.94px;text-align:right;-webkit-text-stroke:0.8px #000;">20.2</div>
<div style="top:648.18px;font-size:44px;line-height:49.15px;color:#000;font-weight:400;right:1211.07px;text-align:right;-webkit-text-stroke:0.8px #000;">190</div>
<div style="top:648.18px;font-size:44px;line-height:49.15px;color:#000;font-weight:400;right:911.01px;text-align:right;-webkit-text-stroke:0.8px #000;">4250</div>
<div style="top:648.18px;font-size:44px;line-height:49.15px;color:#000;font-weight:400;left:1878.50px;-webkit-text-stroke:0.8px #000;">NA</div>
<div style="top:648.18px;font-size:44px;line-height:49.15px;color:#000;font-weight:400;right:619.01px;text-align:right;-webkit-text-stroke:0.8px #000;">2007</div>
<div style="top:712.18px;font-size:44px;line-height:49.15px;color:#000;font-weight:400;left:-957.00px;width:2000px;text-align:center;-webkit-text-stroke:0.7px #000;">12</div>
<div style="top:712.18px;font-size:44px;line-height:49.15px;color:#000;font-weight:400;left:94.50px;-webkit-text-stroke:0.8px #000;">Adelie</div>
<div style="top:712.18px;font-size:44px;line-height:49.15px;color:#000;font-weight:400;left:266.50px;-webkit-text-stroke:0.8px #000;">Torgersen</div>
<div style="top:712.18px;font-size:44px;line-height:49.15px;color:#000;font-weight:400;right:1954.94px;text-align:right;-webkit-text-stroke:0.8px #000;">37.8</div>
<div style="top:712.18px;font-size:44px;line-height:49.15px;color:#000;font-weight:400;right:1622.94px;text-align:right;-webkit-text-stroke:0.8px #000;">17.1</div>
<div style="top:712.18px;font-size:44px;line-height:49.15px;color:#000;font-weight:400;right:1211.07px;text-align:right;-webkit-text-stroke:0.8px #000;">186</div>
<div style="top:712.18px;font-size:44px;line-height:49.15px;color:#000;font-weight:400;right:911.01px;text-align:right;-webkit-text-stroke:0.8px #000;">3300</div>
<div style="top:712.18px;font-size:44px;line-height:49.15px;color:#000;font-weight:400;left:1878.50px;-webkit-text-stroke:0.8px #000;">NA</div>
<div style="top:712.18px;font-size:44px;line-height:49.15px;color:#000;font-weight:400;right:619.01px;text-align:right;-webkit-text-stroke:0.8px #000;">2007</div>
<div style="top:776.18px;font-size:44px;line-height:49.15px;color:#000;font-weight:400;left:-957.00px;width:2000px;text-align:center;-webkit-text-stroke:0.7px #000;">13</div>
<div style="top:776.18px;font-size:44px;line-height:49.15px;color:#000;font-weight:400;left:94.50px;-webkit-text-stroke:0.8px #000;">Adelie</div>
<div style="top:776.18px;font-size:44px;line-height:49.15px;color:#000;font-weight:400;left:266.50px;-webkit-text-stroke:0.8px #000;">Torgersen</div>
<div style="top:776.18px;font-size:44px;line-height:49.15px;color:#000;font-weight:400;right:1954.94px;text-align:right;-webkit-text-stroke:0.8px #000;">37.8</div>
<div style="top:776.18px;font-size:44px;line-height:49.15px;color:#000;font-weight:400;right:1622.94px;text-align:right;-webkit-text-stroke:0.8px #000;">17.3</div>
<div style="top:776.18px;font-size:44px;line-height:49.15px;color:#000;font-weight:400;right:1211.07px;text-align:right;-webkit-text-stroke:0.8px #000;">180</div>
<div style="top:776.18px;font-size:44px;line-height:49.15px;color:#000;font-weight:400;right:911.01px;text-align:right;-webkit-text-stroke:0.8px #000;">3700</div>
<div style="top:776.18px;font-size:44px;line-height:49.15px;color:#000;font-weight:400;left:1878.50px;-webkit-text-stroke:0.8px #000;">NA</div>
<div style="top:776.18px;font-size:44px;line-height:49.15px;color:#000;font-weight:400;right:619.01px;text-align:right;-webkit-text-stroke:0.8px #000;">2007</div>
<div style="top:840.18px;font-size:44px;line-height:49.15px;color:#000;font-weight:400;left:-957.00px;width:2000px;text-align:center;-webkit-text-stroke:0.7px #000;">14</div>
<div style="top:840.18px;font-size:44px;line-height:49.15px;color:#000;font-weight:400;left:94.50px;-webkit-text-stroke:0.8px #000;">Adelie</div>
<div style="top:840.18px;font-size:44px;line-height:49.15px;color:#000;font-weight:400;left:266.50px;-webkit-text-stroke:0.8px #000;">Torgersen</div>
<div style="top:840.18px;font-size:44px;line-height:49.15px;color:#000;font-weight:400;right:1954.94px;text-align:right;-webkit-text-stroke:0.8px #000;">41.1</div>
<div style="top:840.18px;font-size:44px;line-height:49.15px;color:#000;font-weight:400;right:1622.94px;text-align:right;-webkit-text-stroke:0.8px #000;">17.6</div>
<div style="top:840.18px;font-size:44px;line-height:49.15px;color:#000;font-weight:400;right:1211.07px;text-align:right;-webkit-text-stroke:0.8px #000;">182</div>
<div style="top:840.18px;font-size:44px;line-height:49.15px;color:#000;font-weight:400;right:911.01px;text-align:right;-webkit-text-stroke:0.8px #000;">3200</div>
<div style="top:840.18px;font-size:44px;line-height:49.15px;color:#000;font-weight:400;left:1878.50px;-webkit-text-stroke:0.8px #000;">female</div>
<div style="top:840.18px;font-size:44px;line-height:49.15px;color:#000;font-weight:400;right:619.01px;text-align:right;-webkit-text-stroke:0.8px #000;">2007</div>
<div style="top:904.18px;font-size:44px;line-height:49.15px;color:#000;font-weight:400;left:-957.00px;width:2000px;text-align:center;-webkit-text-stroke:0.7px #000;">15</div>
<div style="top:904.18px;font-size:44px;line-height:49.15px;color:#000;font-weight:400;left:94.50px;-webkit-text-stroke:0.8px #000;">Adelie</div>
<div style="top:904.18px;font-size:44px;line-height:49.15px;color:#000;font-weight:400;left:266.50px;-webkit-text-stroke:0.8px #000;">Torgersen</div>
<div style="top:904.18px;font-size:44px;line-height:49.15px;color:#000;font-weight:400;right:1954.94px;text-align:right;-webkit-text-stroke:0.8px #000;">38.6</div>
<div style="top:904.18px;font-size:44px;line-height:49.15px;color:#000;font-weight:400;right:1622.94px;text-align:right;-webkit-text-stroke:0.8px #000;">21.2</div>
<div style="top:904.18px;font-size:44px;line-height:49.15px;color:#000;font-weight:400;right:1211.07px;text-align:right;-webkit-text-stroke:0.8px #000;">191</div>
<div style="top:904.18px;font-size:44px;line-height:49.15px;color:#000;font-weight:400;right:911.01px;text-align:right;-webkit-text-stroke:0.8px #000;">3800</div>
<div style="top:904.18px;font-size:44px;line-height:49.15px;color:#000;font-weight:400;left:1878.50px;-webkit-text-stroke:0.8px #000;">male</div>
<div style="top:904.18px;font-size:44px;line-height:49.15px;color:#000;font-weight:400;right:619.01px;text-align:right;-webkit-text-stroke:0.8px #000;">2007</div>
<div style="top:968.18px;font-size:44px;line-height:49.15px;color:#000;font-weight:400;left:-957.00px;width:2000px;text-align:center;-webkit-text-stroke:0.7px #000;">16</div>
<div style="top:968.18px;font-size:44px;line-height:49.15px;color:#000;font-weight:400;left:94.50px;-webkit-text-stroke:0.8px #000;">Adelie</div>
<div style="top:968.18px;font-size:44px;line-height:49.15px;color:#000;font-weight:400;left:266.50px;-webkit-text-stroke:0.8px #000;">Torgersen</div>
<div style="top:968.18px;font-size:44px;line-height:49.15px;color:#000;font-weight:400;right:1954.94px;text-align:right;-webkit-text-stroke:0.8px #000;">34.6</div>
<div style="top:968.18px;font-size:44px;line-height:49.15px;color:#000;font-weight:400;right:1622.94px;text-align:right;-webkit-text-stroke:0.8px #000;">21.1</div>
<div style="top:968.18px;font-size:44px;line-height:49.15px;color:#000;font-weight:400;right:1211.07px;text-align:right;-webkit-text-stroke:0.8px #000;">198</div>
<div style="top:968.18px;font-size:44px;line-height:49.15px;color:#000;font-weight:400;right:911.01px;text-align:right;-webkit-text-stroke:0.8px #000;">4400</div>
<div style="top:968.18px;font-size:44px;line-height:49.15px;color:#000;font-weight:400;left:1878.50px;-webkit-text-stroke:0.8px #000;">male</div>
<div style="top:968.18px;font-size:44px;line-height:49.15px;color:#000;font-weight:400;right:619.01px;text-align:right;-webkit-text-stroke:0.8px #000;">2007</div>
<div style="top:1032.18px;font-size:44px;line-height:49.15px;color:#000;font-weight:400;left:-957.00px;width:2000px;text-align:center;-webkit-text-stroke:0.7px #000;">17</div>
<div style="top:1032.18px;font-size:44px;line-height:49.15px;color:#000;font-weight:400;left:94.50px;-webkit-text-stroke:0.8px #000;">Adelie</div>
<div style="top:1032.18px;font-size:44px;line-height:49.15px;color:#000;font-weight:400;left:266.50px;-webkit-text-stroke:0.8px #000;">Torgersen</div>
<div style="top:1032.18px;font-size:44px;line-height:49.15px;color:#000;font-weight:400;right:1954.94px;text-align:right;-webkit-text-stroke:0.8px #000;">36.6</div>
<div style="top:1032.18px;font-size:44px;line-height:49.15px;color:#000;font-weight:400;right:1622.94px;text-align:right;-webkit-text-stroke:0.8px #000;">17.8</div>
<div style="top:1032.18px;font-size:44px;line-height:49.15px;color:#000;font-weight:400;right:1211.07px;text-align:right;-webkit-text-stroke:0.8px #000;">185</div>
<div style="top:1032.18px;font-size:44px;line-height:49.15px;color:#000;font-weight:400;right:911.01px;text-align:right;-webkit-text-stroke:0.8px #000;">3700</div>
<div style="top:1032.18px;font-size:44px;line-height:49.15px;color:#000;font-weight:400;left:1878.50px;-webkit-text-stroke:0.8px #000;">female</div>
<div style="top:1032.18px;font-size:44px;line-height:49.15px;color:#000;font-weight:400;right:619.01px;text-align:right;-webkit-text-stroke:0.8px #000;">2007</div>
<div style="top:1096.18px;font-size:44px;line-height:49.15px;color:#000;font-weight:400;left:-957.00px;width:2000px;text-align:center;-webkit-text-stroke:0.7px #000;">18</div>
<div style="top:1096.18px;font-size:44px;line-height:49.15px;color:#000;font-weight:400;left:94.50px;-webkit-text-stroke:0.8px #000;">Adelie</div>
<div style="top:1096.18px;font-size:44px;line-height:49.15px;color:#000;font-weight:400;left:266.50px;-webkit-text-stroke:0.8px #000;">Torgersen</div>
<div style="top:1096.18px;font-size:44px;line-height:49.15px;color:#000;font-weight:400;right:1954.94px;text-align:right;-webkit-text-stroke:0.8px #000;">38.7</div>
<div style="top:1096.18px;font-size:44px;line-height:49.15px;color:#000;font-weight:400;right:1622.90px;text-align:right;-webkit-text-stroke:0.8px #000;">19</div>
<div style="top:1096.18px;font-size:44px;line-height:49.15px;color:#000;font-weight:400;right:1211.07px;text-align:right;-webkit-text-stroke:0.8px #000;">195</div>
<div style="top:1096.18px;font-size:44px;line-height:49.15px;color:#000;font-weight:400;right:911.01px;text-align:right;-webkit-text-stroke:0.8px #000;">3450</div>
<div style="top:1096.18px;font-size:44px;line-height:49.15px;color:#000;font-weight:400;left:1878.50px;-webkit-text-stroke:0.8px #000;">female</div>
<div style="top:1096.18px;font-size:44px;line-height:49.15px;color:#000;font-weight:400;right:619.01px;text-align:right;-webkit-text-stroke:0.8px #000;">2007</div>
<div style="top:1160.18px;font-size:44px;line-height:49.15px;color:#000;font-weight:400;left:-957.00px;width:2000px;text-align:center;-webkit-text-stroke:0.7px #000;">19</div>
<div style="top:1160.18px;font-size:44px;line-height:49.15px;color:#000;font-weight:400;left:94.50px;-webkit-text-stroke:0.8px #000;">Adelie</div>
<div style="top:1160.18px;font-size:44px;line-height:49.15px;color:#000;font-weight:400;left:266.50px;-webkit-text-stroke:0.8px #000;">Torgersen</div>
<div style="top:1160.18px;font-size:44px;line-height:49.15px;color:#000;font-weight:400;right:1954.94px;text-align:right;-webkit-text-stroke:0.8px #000;">42.5</div>
<div style="top:1160.18px;font-size:44px;line-height:49.15px;color:#000;font-weight:400;right:1622.94px;text-align:right;-webkit-text-stroke:0.8px #000;">20.7</div>
<div style="top:1160.18px;font-size:44px;line-height:49.15px;color:#000;font-weight:400;right:1211.07px;text-align:right;-webkit-text-stroke:0.8px #000;">197</div>
<div style="top:1160.18px;font-size:44px;line-height:49.15px;color:#000;font-weight:400;right:911.01px;text-align:right;-webkit-text-stroke:0.8px #000;">4500</div>
<div style="top:1160.18px;font-size:44px;line-height:49.15px;color:#000;font-weight:400;left:1878.50px;-webkit-text-stroke:0.8px #000;">male</div>
<div style="top:1160.18px;font-size:44px;line-height:49.15px;color:#000;font-weight:400;right:619.01px;text-align:right;-webkit-text-stroke:0.8px #000;">2007</div>
</div>
<div style="left:200px;top:460px;width:174px;height:4px;background:#217346;"></div>
<div style="left:196px;top:464px;width:4px;height:66px;background:#217346;"></div>
<div style="left:370px;top:464px;width:4px;height:56px;background:#217346;"></div>
<div style="left:196px;top:526px;width:168px;height:4px;background:#217346;"></div>
<div style="left:364px;top:520px;width:14px;height:14px;background:#ffffff;"></div>
<div style="left:366px;top:522px;width:10px;height:10px;background:#217346;"></div>
<div style="left:2886px;top:376px;width:30px;height:1266px;background:#fafafa;"></div>
<div style="left:2886px;top:383px;width:1px;height:1259px;background:#e0e0e0;"></div>
<div style="left:2886px;top:383px;width:30px;height:1px;background:#d8d8d8;"></div>
<div style="left:2892px;top:378px;width:18px;height:3px;background:#dcdcdc;"></div>
<div style="left:2894px;top:388px;width:18px;height:315px;border-radius:9px;background:#bababa;"></div>
<div style="left:112px;top:1642px;width:2774px;height:30px;background:#f8f8f8;"></div>
<div style="left:112px;top:1642px;width:2774px;height:1px;background:#e4e4e4;"></div>
<div style="left:117px;top:1650px;width:1621px;height:18px;border-radius:9px;background:#bababa;"></div>
<div style="left:2878px;top:1643px;width:1px;height:29px;background:#d8d8d8;"></div>
<div style="left:2886px;top:1642px;width:30px;height:30px;background:#ffffff;"></div>
<div style="left:112px;top:1672px;width:2804px;height:52px;background:linear-gradient(#e9e9e9,#efefef 20%,#f0f0f0);"></div>
<div style="left:112px;top:1672px;width:2804px;height:1px;background:#c8c8c8;"></div>
<div style="left:112px;top:1723px;width:2804px;height:2px;background:#a8a8a8;"></div>
<div style="left:237px;top:1672px;width:262px;height:45px;border-radius:0 0 6px 0;background:#ffffff;box-shadow:1px 1px 2px rgba(0,0,0,0.35);"></div>
<div style="top:1685.98px;font-size:24px;line-height:26.81px;color:#1e8449;font-weight:700;letter-spacing:-0.09px;left:270.20px;">Torgersen Island</div>
<div style="top:1686.28px;font-size:24px;line-height:26.81px;color:#555555;font-weight:400;letter-spacing:-0.16px;left:535.30px;">Biscoe Island</div>
<div style="top:1686.28px;font-size:24px;line-height:26.81px;color:#555555;font-weight:400;letter-spacing:-0.16px;left:749.50px;">Dream Island</div>
<div style="left:712px;top:1674.5px;width:2px;height:39.5px;background:#cfcfcf;"></div>
<div style="left:925px;top:1674.5px;width:2px;height:39.5px;background:#cfcfcf;"></div>
<div style="left:1002px;top:1674.5px;width:2px;height:39.5px;background:#cfcfcf;"></div>
<div style="left:956px;top:1695px;width:20px;height:4px;background:#5f5f5f;"></div>
<div style="left:964px;top:1687px;width:4px;height:20px;background:#5f5f5f;"></div>
<svg style="left:140px;top:1688px;" width="64" height="22"><polygon points="16,1 16,21 1,11" fill="#b8b8b8"/><polygon points="48,1 48,21 63,11" fill="#b8b8b8"/></svg>
<div style="left:112px;top:1725px;width:2804px;height:45px;background:linear-gradient(#e4e4e4,#d9d9d9);"></div>
<div style="top:1736.23px;font-size:23.5px;line-height:26.25px;color:#555555;font-weight:400;letter-spacing:-0.18px;left:161.70px;">Ready</div>
<div style="left:2274px;top:1726px;width:74px;height:44px;background:#a9a9a9;"></div>
<div style="top:1735.28px;font-size:24px;line-height:26.81px;color:#555555;font-weight:400;letter-spacing:0.72px;right:161.54px;text-align:right;">200%</div>
<div style="left:2536px;top:1744px;width:200px;height:8px;border-radius:4px;background:#9c9c9c;"></div>
<div style="left:2654px;top:1736px;width:22px;height:22px;border-radius:50%;background:#ffffff;box-shadow:0 1px 2px rgba(0,0,0,0.4);"></div>
<div style="left:2506px;top:1746px;width:16px;height:4px;background:#666;"></div>
<div style="left:2750px;top:1746px;width:16px;height:4px;background:#666;"></div>
<div style="left:2756px;top:1739px;width:4px;height:17px;background:#666;"></div>
<div style="left:225px;top:1651px;width:717px;height:88px;box-sizing:border-box;border:12.5px solid #189ffb;border-radius:32px;"></div>
<svg style="left:512px;top:85px;overflow:visible" width="40" height="34" viewBox="512 85 40 34"><rect x="517" y="89.5" width="30" height="25" rx="2.5" fill="none" stroke="#d3e5da" stroke-width="2.6"/><rect x="522" y="89.5" width="2.6" height="25" fill="#d3e5da"/><path d="M529 93.5 H537.5 L543.5 99.5 V111 H529 Z" fill="none" stroke="#d3e5da" stroke-width="2.2"/><path d="M537.5 93.5 V99.5 H543.5" fill="none" stroke="#d3e5da" stroke-width="1.6"/><rect x="518.8" y="92" width="1.8" height="2" fill="#d3e5da"/><rect x="518.8" y="96" width="1.8" height="2" fill="#d3e5da"/><rect x="518.8" y="100" width="1.8" height="2" fill="#d3e5da"/></svg>
<svg style="left:576px;top:85px;overflow:visible" width="36" height="34" viewBox="576 85 36 34"><path d="M582 88 H606 Q608 88 608 90 V114 Q608 116 606 116 H582 Q580 116 580 114 V90 Q580 88 582 88 Z" fill="#d3e5da"/><rect x="584.5" y="90.5" width="19" height="9.5" fill="#2c7a51"/><rect x="588" y="106" width="12" height="10" fill="#2c7a51"/><rect x="591" y="109" width="5" height="7" fill="#d3e5da"/></svg>
<svg style="left:636px;top:88px;overflow:visible" width="64" height="30" viewBox="636 88 64 30"><path d="M645 106 Q650 95 659 95 Q668 96 668 104 Q668 108 664 112" fill="none" stroke="#d3e5da" stroke-width="3.6" stroke-linecap="round"/><polygon points="639.5,97 639.5,112 654,112" fill="#d3e5da"/><polygon points="686,98.6 696,98.6 691,107" fill="#d3e5da"/></svg>
<svg style="left:722px;top:86px;overflow:visible" width="32" height="33" viewBox="722 86 32 33"><path d="M738 95 A10 10 0 1 0 748 105" fill="none" stroke="#d3e5da" stroke-width="3.6" stroke-linecap="round" transform="rotate(0)"/><polygon points="737,89 748,89.6 740,100" fill="#d3e5da"/></svg>
<svg style="left:788px;top:92px;overflow:visible" width="24" height="20" viewBox="788 92 24 20"><rect x="792" y="94" width="16" height="2.2" fill="#d3e5da"/><polygon points="792,99 808,99 800,109" fill="#d3e5da"/></svg>
<svg style="left:1306px;top:85px;overflow:visible" width="34" height="35" viewBox="1306 85 34 35"><path d="M1313 88 H1331 L1337 94 V116.5 H1313 Z" fill="#fff" stroke="#cfd8d2" stroke-width="1"/><path d="M1331 88 V94 H1337" fill="#e6e6e6" stroke="#bbb" stroke-width="0.8"/><rect x="1318" y="97" width="16" height="17" fill="#b9d8c0"/><path d="M1318 101.3 H1334 M1318 105.5 H1334 M1318 109.8 H1334 M1326 97 V114" stroke="#fff" stroke-width="1.2"/><rect x="1309" y="93" width="13.5" height="18" fill="#1f7244"/><text x="1311.5" y="107.5" font-family="Liberation Sans" font-size="11" fill="#fff">X</text></svg>
<svg style="left:2458px;top:86px;overflow:visible" width="42" height="30" viewBox="2458 86 42 30"><circle cx="2470.5" cy="98.5" r="7.5" fill="none" stroke="#d3e5da" stroke-width="2"/><path d="M2476 104 L2484 112" stroke="#d3e5da" stroke-width="2.2" stroke-linecap="round"/><path d="M2488 99 L2492 103 L2496 99" fill="none" stroke="#d3e5da" stroke-width="1.8"/></svg>
<svg style="left:2838px;top:84px;overflow:visible" width="58" height="36" viewBox="2838 84 58 36"><circle cx="2858" cy="102" r="14.8" fill="none" stroke="#d3e5da" stroke-width="2.4"/><rect x="2852.5" y="94.5" width="2.4" height="6" rx="1" fill="#d3e5da"/><rect x="2861.2" y="94.5" width="2.4" height="6" rx="1" fill="#d3e5da"/><path d="M2850 104.5 Q2858 113 2866 104.5" fill="none" stroke="#d3e5da" stroke-width="2.2" stroke-linecap="round"/><polygon points="2882,99 2892,99 2887,106.4" fill="#d3e5da"/></svg>
<svg style="left:2722px;top:136px;overflow:visible" width="38" height="32" viewBox="2722 136 38 32"><path d="M2727.6 148 V163 H2755" fill="none" stroke="#d3e5da" stroke-width="2.6"/><path d="M2733 158 Q2735 148 2746 147 V142 L2756 149.5 L2746 157 V152 Q2738 152 2733 158 Z" fill="#d3e5da"/></svg>
<svg style="left:2858px;top:142px;overflow:visible" width="28" height="18" viewBox="2858 142 28 18"><path d="M2863 156 L2871.8 147 L2880.6 156" fill="none" stroke="#d3e5da" stroke-width="3.4" stroke-linecap="round"/></svg>
<svg style="left:2290px;top:1728px;overflow:visible" width="190" height="40" viewBox="2290 1728 190 40"><rect x="2298" y="1734.4" width="26" height="25.4" rx="2" fill="#fff"/><path d="M2298 1742.5 H2324 M2298 1751.3 H2324 M2306.6 1734.4 V1759.8 M2315.4 1734.4 V1759.8" stroke="#a9a9a9" stroke-width="2.2"/><rect x="2370.6" y="1735" width="26" height="24.5" fill="none" stroke="#666" stroke-width="2"/><rect x="2375.5" y="1740" width="16" height="14.5" fill="none" stroke="#666" stroke-width="2"/><path d="M2379 1744.5 H2388 M2379 1748 H2388 M2379 1751.2 H2388" stroke="#666" stroke-width="1.6"/><rect x="2441.2" y="1735" width="26" height="24.5" fill="none" stroke="#666" stroke-width="2"/><path d="M2441.2 1748 H2454 V1735 M2449 1735 V1748" stroke="#666" stroke-width="2" fill="none"/></svg>
<div style="left:2632px;top:1744px;width:7px;height:7px;border-radius:50%;background:#e6e6e6;"></div>
<svg style="left:140px;top:188px;overflow:visible" width="82" height="62" viewBox="140 188 82 62"><rect x="142" y="196" width="44" height="50" rx="4" fill="#efdfc5" stroke="#e2cfb0" stroke-width="1"/><rect x="150" y="193" width="28" height="12" rx="5" fill="#c9c9c9"/><rect x="158" y="189" width="12" height="10" rx="5" fill="#c9c9c9"/><circle cx="164" cy="194" r="2" fill="#efdfc5"/><path d="M157.5 211.5 H177 L188.5 223 V248.3 H157.5 Z" fill="#f7f7f7" stroke="#d5d5d5" stroke-width="1"/><path d="M177 211.5 V223 H188.5" fill="#ececec" stroke="#d5d5d5" stroke-width="1"/><polygon points="208.0,217.75 218.0,217.75 213,225.25" fill="#b3b3b3"/></svg>
<div style="top:263.00px;font-size:21px;line-height:23.46px;color:#7f7f7f;font-weight:400;letter-spacing:0.09px;left:149.00px;">Paste</div>
<svg style="left:244px;top:182px;overflow:visible" width="32" height="36" viewBox="244 182 32 36"><path d="M250 184.5 L266.5 206" stroke="#1a1a1a" stroke-width="4.6" fill="none" stroke-linecap="round"/><path d="M271.5 184.5 L255 206" stroke="#1a1a1a" stroke-width="4.6" fill="none" stroke-linecap="round"/><circle cx="252.5" cy="210.5" r="5" fill="#f6f6f6" stroke="#1f6fd1" stroke-width="2.2"/><circle cx="268.5" cy="210.5" r="5" fill="#f6f6f6" stroke="#1f6fd1" stroke-width="2.2"/></svg>
<div style="top:188.80px;font-size:21px;line-height:23.46px;color:#000;font-weight:400;letter-spacing:0.17px;left:287.00px;">Cut</div>
<svg style="left:245px;top:229px;overflow:visible" width="30" height="33" viewBox="245 229 30 33"><path d="M247.5 239.5 H263 V260.2 H247.5 Z" fill="#fff" stroke="#555" stroke-width="1"/><path d="M255.5 231.5 H265.5 L272 238 V252 H255.5 Z" fill="#fff" stroke="#555" stroke-width="1"/><path d="M265.5 231.5 V238 H272" fill="#eee" stroke="#555" stroke-width="1"/></svg>
<div style="top:234.19px;font-size:21px;line-height:23.46px;color:#000;font-weight:400;letter-spacing:-0.01px;left:287.00px;">Copy</div>
<svg style="left:345px;top:240px;overflow:visible" width="20" height="12" viewBox="345 240 20 12"><polygon points="350.0,241.95 360.0,241.95 355,249.45" fill="#666"/></svg>
<svg style="left:242px;top:276px;overflow:visible" width="36" height="32" viewBox="242 276 36 32"><path d="M245 293 L262 282 L270 294 L260 306 Z" fill="#3c86d8"/><path d="M248 291 L262 283 L268 292 L257 300 Z" fill="#b7a995"/><path d="M257 285 L266 279 L273 289 L264 295 Z" fill="#e9e9e9" stroke="#777" stroke-width="1"/><path d="M265 281 L272 276 Q277 275 276 280 L270 287 Z" fill="#f2f2f2" stroke="#777" stroke-width="1"/></svg>
<div style="top:281.00px;font-size:21px;line-height:23.46px;color:#000;font-weight:400;letter-spacing:0.43px;left:287.00px;">Format</div>
<div style="left:402.4px;top:192.3px;width:208.80000000000007px;height:47.099999999999994px;background:#ffffff;border:1.5px solid #bdbdbd;box-sizing:border-box;border-radius:6px;box-shadow:0 0.5px 1px rgba(0,0,0,0.08) inset;"></div>
<div style="left:582px;top:198px;width:1.5px;height:35.400000000000006px;background:#dadada;"></div>
<svg style="left:590px;top:210px;overflow:visible" width="15" height="11" viewBox="590 210 15 11"><polygon points="592.3,211.5 602.3,211.5 597.3,219.5" fill="#666"/></svg>
<div style="top:201.57px;font-size:25px;line-height:27.93px;color:#000;font-weight:400;left:413.00px;">Calibri (Body)</div>
<div style="left:620.2px;top:192.3px;width:105.29999999999995px;height:47.099999999999994px;background:#ffffff;border:1.5px solid #bdbdbd;box-sizing:border-box;border-radius:6px;box-shadow:0 0.5px 1px rgba(0,0,0,0.08) inset;"></div>
<div style="left:696px;top:198px;width:1.5px;height:35.400000000000006px;background:#dadada;"></div>
<svg style="left:704px;top:210px;overflow:visible" width="15" height="11" viewBox="704 210 15 11"><polygon points="706.0,211.5 716.0,211.5 711,219.5" fill="#666"/></svg>
<div style="top:201.57px;font-size:25px;line-height:27.93px;color:#000;font-weight:400;left:630.00px;">12</div>
<div style="left:734.8px;top:193.5px;width:115.60000000000002px;height:45.30000000000001px;background:linear-gradient(#fdfdfd,#eeeeee);border:1.5px solid #c4c4c4;box-sizing:border-box;border-radius:6px;"></div>
<div style="left:792px;top:195px;width:1.5px;height:42.5px;background:#d4d4d4;"></div>
<div style="top:199.56px;font-size:29px;line-height:32.39px;color:#333;font-weight:400;left:745.80px;-webkit-text-stroke:1.2px #333;">A</div>
<svg style="left:768px;top:208px;overflow:visible" width="18" height="12" viewBox="768 208 18 12"><polygon points="769.7,218.0 783.7,218.0 776.7,210.0" fill="#3a8ee6"/></svg>
<div style="top:205.89px;font-size:22px;line-height:24.57px;color:#333;font-weight:400;left:805.60px;-webkit-text-stroke:0.9px #333;">A</div>
<svg style="left:824px;top:211px;overflow:visible" width="16" height="11" viewBox="824 211 16 11"><polygon points="825.5,212.8 838.5,212.8 832,220.8" fill="#3a8ee6"/></svg>
<div style="left:402.4px;top:252.7px;width:195.89999999999998px;height:46.5px;background:linear-gradient(#fdfdfd,#eeeeee);border:1.5px solid #c4c4c4;box-sizing:border-box;border-radius:6px;"></div>
<div style="left:402.4px;top:252.7px;width:59.60000000000002px;height:46.5px;background:linear-gradient(#d2d2d2,#dcdcdc);border:1.5px solid #b0b0b0;box-sizing:border-box;border-radius:6px 0 0 6px;"></div>
<div style="left:518.5px;top:254px;width:1.5px;height:44px;background:#d4d4d4;"></div>
<div style="left:574.5px;top:258px;width:1.5px;height:36px;background:#d4d4d4;"></div>
<div style="top:260.66px;font-size:28px;line-height:31.28px;color:#2b2b2b;font-weight:700;left:423.90px;">B</div>
<div style="left:480px;top:258px;font-size:30px;line-height:34px;font-family:'Liberation Serif',serif;font-style:italic;font-weight:700;color:#2b2b2b;">I</div>
<div style="top:262.47px;font-size:26px;line-height:29.04px;color:#2b2b2b;font-weight:400;left:538.50px;-webkit-text-stroke:0.9px #2b2b2b;">U</div>
<div style="left:538.5px;top:288.6px;width:18.899999999999977px;height:2.0px;background:#2b2b2b;"></div>
<svg style="left:580px;top:270px;overflow:visible" width="15" height="11" viewBox="580 270 15 11"><polygon points="582.0,271.3 592.0,271.3 587,279.3" fill="#666"/></svg>
<div style="left:609.3px;top:252.7px;width:77.30000000000007px;height:46.5px;background:linear-gradient(#fdfdfd,#eeeeee);border:1.5px solid #c4c4c4;box-sizing:border-box;border-radius:6px;"></div>
<div style="left:662px;top:258px;width:1.5px;height:36px;background:#d4d4d4;"></div>
<svg style="left:618px;top:256px;overflow:visible" width="40" height="40" viewBox="618 256 40 40"><path d="M621.5 259 H654.5 V291 M621.5 259 V291 M638 259 V291 M621.5 275 H654.5" stroke="#8a8a8a" stroke-width="1.5" stroke-dasharray="2,2.5" fill="none"/><rect x="620.8" y="290.6" width="34.2" height="2.2" fill="#222"/></svg>
<svg style="left:668px;top:270px;overflow:visible" width="15" height="11" viewBox="668 270 15 11"><polygon points="670.0,271.3 680.0,271.3 675,279.3" fill="#666"/></svg>
<div style="left:697.4px;top:252.7px;width:153.0px;height:46.5px;background:linear-gradient(#fdfdfd,#eeeeee);border:1.5px solid #c4c4c4;box-sizing:border-box;border-radius:6px;"></div>
<div style="left:746px;top:258px;width:1.5px;height:36px;background:#d4d4d4;"></div>
<div style="left:770.3px;top:254px;width:1.5px;height:44px;background:#d4d4d4;"></div>
<div style="left:826.3px;top:258px;width:1.5px;height:36px;background:#d4d4d4;"></div>
<svg style="left:700px;top:252px;overflow:visible" width="40" height="44" viewBox="700 252 40 44"><path d="M708 271.5 L718.5 261 L728.5 271.5 L718 281.8 Z" fill="#fff" stroke="#333" stroke-width="1.2" stroke-linejoin="round"/><path d="M714.3 265.8 L725 274.8" stroke="#3d8ee6" stroke-width="4"/><path d="M718.6 261.5 Q717.8 256.3 721 256.3 Q724.2 256.3 723.8 260.5 L723.2 267.3" stroke="#222" stroke-width="2.3" fill="none" stroke-linecap="round"/><path d="M724.5 266.3 Q731 267 731.2 272.5 Q731.2 276.5 729.5 278.5" stroke="#2f7fd8" stroke-width="3.4" fill="none" stroke-linecap="round"/><rect x="702.5" y="284" width="35" height="9.5" rx="2" fill="#fdfb00" stroke="#dede00" stroke-width="1"/></svg>
<svg style="left:751px;top:270px;overflow:visible" width="15" height="11" viewBox="751 270 15 11"><polygon points="753.7,271.3 763.7,271.3 758.7,279.3" fill="#666"/></svg>
<div style="top:256.07px;font-size:26px;line-height:29.04px;color:#333;font-weight:400;left:790.00px;-webkit-text-stroke:0.6px #333;">A</div>
<svg style="left:780px;top:282px;overflow:visible" width="40" height="13" viewBox="780 282 40 13"><rect x="782" y="284" width="35.5" height="9.5" rx="2" fill="#fb0007" stroke="#e00000" stroke-width="1"/></svg>
<svg style="left:831px;top:270px;overflow:visible" width="15" height="11" viewBox="831 270 15 11"><polygon points="833.5,271.3 843.5,271.3 838.5,279.3" fill="#666"/></svg>
<div style="left:887.2px;top:193.2px;width:173.79999999999995px;height:45.60000000000002px;background:linear-gradient(#fdfdfd,#eeeeee);border:1.5px solid #c4c4c4;box-sizing:border-box;border-radius:6px;"></div>
<div style="left:1002.8px;top:193.2px;width:58.200000000000045px;height:45.60000000000002px;background:linear-gradient(#cfcfcf,#dadada);border:1.5px solid #a9a9a9;box-sizing:border-box;border-radius:0 6px 6px 0;"></div>
<div style="left:944.3px;top:195px;width:1.5px;height:42.5px;background:#d4d4d4;"></div>
<svg style="left:900px;top:200px;overflow:visible" width="150" height="32" viewBox="900 200 150 32"><rect x="904" y="203.4" width="24" height="2.2" fill="#1e1e1e"/><rect x="904" y="210.1" width="24" height="2.2" fill="#1e1e1e"/><rect x="962" y="211.6" width="24" height="2.2" fill="#1e1e1e"/><rect x="962" y="218" width="24" height="2.2" fill="#1e1e1e"/><rect x="1020" y="219.5" width="24" height="2.2" fill="#1e1e1e"/><rect x="1020" y="226.1" width="24" height="2.2" fill="#1e1e1e"/></svg>
<div style="left:1071px;top:193px;width:71.5px;height:46px;background:linear-gradient(#fdfdfd,#eeeeee);border:1.5px solid #c4c4c4;box-sizing:border-box;border-radius:6px;"></div>
<svg style="left:1073px;top:195px;overflow:visible" width="67" height="42" viewBox="1073 195 67 42"><text x="0" y="0" transform="translate(1090.5,229.5) rotate(-45)" font-family="Liberation Sans" font-size="27" fill="#333" stroke="#333" stroke-width="0.5">ab</text><path d="M1096.5 231 L1113 214.5" stroke="#2f7fd8" stroke-width="2.2"/><polygon points="1108.5,212 1116,212 1116,219.5" fill="#3d8ee6"/><polygon points="1126.0,211.6 1136.0,211.6 1131,219.6" fill="#666"/></svg>
<div style="left:887.2px;top:253.4px;width:173.79999999999995px;height:45.49999999999997px;background:linear-gradient(#fdfdfd,#eeeeee);border:1.5px solid #c4c4c4;box-sizing:border-box;border-radius:6px;"></div>
<div style="left:944.3px;top:255px;width:1.5px;height:42.5px;background:#d4d4d4;"></div>
<div style="left:1002.3px;top:255px;width:1.5px;height:42.5px;background:#d4d4d4;"></div>
<svg style="left:900px;top:262px;overflow:visible" width="150" height="28" viewBox="900 262 150 28"><rect x="902" y="265.4" width="26" height="2.2" fill="#1e1e1e"/><rect x="902" y="271.9" width="17.799999999999955" height="2.2" fill="#1e1e1e"/><rect x="902" y="277.9" width="29.799999999999955" height="2.2" fill="#1e1e1e"/><rect x="902" y="283.8" width="21.799999999999955" height="2.2" fill="#1e1e1e"/><rect x="962" y="265.4" width="24" height="2.2" fill="#1e1e1e"/><rect x="966" y="271.9" width="16" height="2.2" fill="#1e1e1e"/><rect x="960" y="277.9" width="28" height="2.2" fill="#1e1e1e"/><rect x="964" y="283.8" width="20" height="2.2" fill="#1e1e1e"/><rect x="1020" y="265.4" width="26" height="2.2" fill="#1e1e1e"/><rect x="1028" y="271.9" width="18" height="2.2" fill="#1e1e1e"/><rect x="1016" y="277.9" width="30" height="2.2" fill="#1e1e1e"/><rect x="1024" y="283.8" width="22" height="2.2" fill="#1e1e1e"/></svg>
<div style="left:1071px;top:253.4px;width:115.70000000000005px;height:45.49999999999997px;background:linear-gradient(#fdfdfd,#eeeeee);border:1.5px solid #c4c4c4;box-sizing:border-box;border-radius:6px;"></div>
<div style="left:1128.1px;top:255px;width:1.5px;height:42.5px;background:#d4d4d4;"></div>
<svg style="left:1078px;top:262px;overflow:visible" width="102" height="28" viewBox="1078 262 102 28"><rect x="1096" y="265.4" width="20" height="2.2" fill="#1e1e1e"/><rect x="1103" y="271.9" width="13" height="2.2" fill="#1e1e1e"/><rect x="1103" y="277.9" width="13" height="2.2" fill="#1e1e1e"/><rect x="1096" y="283.8" width="20" height="2.2" fill="#1e1e1e"/><rect x="1154" y="265.4" width="20" height="2.2" fill="#1e1e1e"/><rect x="1161" y="271.9" width="13" height="2.2" fill="#1e1e1e"/><rect x="1161" y="277.9" width="13" height="2.2" fill="#1e1e1e"/><rect x="1154" y="283.8" width="20" height="2.2" fill="#1e1e1e"/><path d="M1082 276 L1090 268 V272 H1097.5 V280 H1090 V284 Z" fill="#3d8ee6"/><path d="M1154 277 L1146 269 V273 H1140 V281 H1146 V285 Z" fill="#3d8ee6"/></svg>
<svg style="left:1230px;top:200px;overflow:visible" width="46" height="34" viewBox="1230 200 46 34"><rect x="1233.5" y="205.5" width="19.5" height="23.5" fill="#fff" stroke="#555" stroke-width="1"/><rect x="1236" y="209.8" width="24" height="1.6" fill="#333"/><rect x="1236" y="222" width="10" height="1.6" fill="#333"/><path d="M1263 208 Q1275 212 1268 222 L1264 224" stroke="#3d8ee6" stroke-width="3" fill="none"/><polygon points="1257,223 1266,218 1266,229" fill="#3d8ee6"/></svg>
<div style="top:205.09px;font-size:21px;line-height:23.46px;color:#000;font-weight:400;letter-spacing:0.69px;left:1280.70px;">Wrap Text</div>
<svg style="left:1232px;top:256px;overflow:visible" width="38" height="38" viewBox="1232 256 38 38"><rect x="1235.5" y="259.5" width="31" height="31" fill="#fff" stroke="#666" stroke-width="1"/><path d="M1235.5 266 H1266.5 M1235.5 284 H1266.5 M1251 259.5 V266 M1251 284 V290.5" stroke="#bbb" stroke-width="1"/><path d="M1244 275 H1258" stroke="#3d8ee6" stroke-width="2"/><polygon points="1240,275 1246,270 1246,280" fill="#3d8ee6"/><polygon points="1262,275 1256,270 1256,280" fill="#3d8ee6"/></svg>
<div style="top:265.00px;font-size:21px;line-height:23.46px;color:#000;font-weight:400;letter-spacing:0.67px;left:1280.70px;">Merge &amp; Center</div>
<svg style="left:1448px;top:270px;overflow:visible" width="16" height="12" viewBox="1448 270 16 12"><polygon points="1451.0,271.95 1461.0,271.95 1456,279.45" fill="#666"/></svg>
<div style="left:1503.6px;top:192.4px;width:317.0px;height:47.099999999999994px;background:#ffffff;border:1.5px solid #bdbdbd;box-sizing:border-box;border-radius:6px;box-shadow:0 0.5px 1px rgba(0,0,0,0.08) inset;"></div>
<div style="left:1791.5px;top:198px;width:1.5px;height:35.5px;background:#dadada;"></div>
<svg style="left:1798px;top:210px;overflow:visible" width="16" height="11" viewBox="1798 210 16 11"><polygon points="1801.0,211.6 1811.0,211.6 1806,219.6" fill="#666"/></svg>
<div style="top:201.18px;font-size:25px;line-height:27.93px;color:#000;font-weight:400;letter-spacing:-0.5px;left:1513.60px;">General</div>
<div style="left:1504.2px;top:253.4px;width:189.29999999999995px;height:45.49999999999997px;background:linear-gradient(#fdfdfd,#eeeeee);border:1.5px solid #c4c4c4;box-sizing:border-box;border-radius:6px;"></div>
<div style="left:1553px;top:260px;width:1.5px;height:32px;background:#d4d4d4;"></div>
<div style="left:1577.3px;top:255px;width:1.5px;height:42.5px;background:#d4d4d4;"></div>
<div style="left:1635.5px;top:255px;width:1.5px;height:42.5px;background:#d4d4d4;"></div>
<svg style="left:1506px;top:260px;overflow:visible" width="42" height="34" viewBox="1506 260 42 34"><ellipse cx="1535" cy="285" rx="10.5" ry="5" fill="#9a6a22"/><ellipse cx="1535" cy="282" rx="10.5" ry="5" fill="#f0c64a" stroke="#a57a2a" stroke-width="1"/><ellipse cx="1535" cy="279" rx="10.5" ry="5" fill="#9a6a22"/><ellipse cx="1535" cy="276" rx="10.5" ry="5" fill="#f0c64a" stroke="#a57a2a" stroke-width="1"/><ellipse cx="1535" cy="272" rx="10.5" ry="5" fill="#9a6a22"/><ellipse cx="1535" cy="269" rx="10.5" ry="5" fill="#f0c64a" stroke="#a57a2a" stroke-width="1"/><ellipse cx="1521" cy="288" rx="10.5" ry="5" fill="#9a6a22"/><ellipse cx="1521" cy="285" rx="10.5" ry="5" fill="#f0c64a" stroke="#a57a2a" stroke-width="1"/><ellipse cx="1521" cy="281" rx="10.5" ry="5" fill="#9a6a22"/><ellipse cx="1521" cy="278" rx="10.5" ry="5" fill="#f0c64a" stroke="#a57a2a" stroke-width="1"/></svg>
<svg style="left:1559px;top:270px;overflow:visible" width="15" height="11" viewBox="1559 270 15 11"><polygon points="1561.0,271.4 1571.0,271.4 1566,279.4" fill="#666"/></svg>
<div style="top:261.86px;font-size:29px;line-height:32.39px;color:#333;font-weight:400;left:1595.00px;">%</div>
<svg style="left:1655px;top:264px;overflow:visible" width="20" height="26" viewBox="1655 264 20 26"><path d="M1659 266 Q1675 268 1671 280 Q1668 286 1660 288 Q1667 281 1664 276 Q1662 272 1659 266 Z" fill="#333"/></svg>
<div style="left:1704.2px;top:253.4px;width:115.5px;height:45.49999999999997px;background:linear-gradient(#fdfdfd,#eeeeee);border:1.5px solid #c4c4c4;box-sizing:border-box;border-radius:6px;"></div>
<div style="left:1761.1px;top:255px;width:1.5px;height:42.5px;background:#d4d4d4;"></div>
<div style="top:258.51px;font-size:17px;line-height:18.99px;color:#222;font-weight:400;left:1735.60px;">.0</div>
<div style="top:275.01px;font-size:17px;line-height:18.99px;color:#222;font-weight:400;left:1726.00px;">.00</div>
<div style="top:258.51px;font-size:17px;line-height:18.99px;color:#222;font-weight:400;left:1784.00px;">.00</div>
<div style="top:275.01px;font-size:17px;line-height:18.99px;color:#222;font-weight:400;left:1794.00px;">.0</div>
<svg style="left:1714px;top:260px;overflow:visible" width="81" height="34" viewBox="1714 260 81 34"><path d="M1717 268.5 L1724.5 262 V265 H1732.5 V272 H1724.5 V275.4 Z" fill="#3d8ee6"/><path d="M1791 284.5 L1783.5 278 V281 H1775 V288 H1783.5 V291.9 Z" fill="#3d8ee6"/></svg>
<svg style="left:1870px;top:190px;overflow:visible" width="90" height="65" viewBox="1870 190 90 65"><rect x="1876.5" y="197.3" width="51.2" height="46.8" fill="#fff" stroke="#666" stroke-width="1"/><rect x="1889" y="197.8" width="12.4" height="10.6" fill="#e77b7f"/><rect x="1889" y="208.4" width="19.5" height="11.6" fill="#6aa7e6"/><rect x="1889" y="220" width="24.5" height="12.5" fill="#e77b7f"/><rect x="1889" y="232.5" width="12.4" height="11.6" fill="#6aa7e6"/><path d="M1889 197.3 V244.1" stroke="#999" stroke-width="0.8"/><path d="M1901.4 197.3 V244.1" stroke="#999" stroke-width="0.8"/><path d="M1914.4 197.3 V244.1" stroke="#999" stroke-width="0.8"/><path d="M1876.5 208.4 H1927.7" stroke="#999" stroke-width="0.8"/><path d="M1876.5 220 H1927.7" stroke="#999" stroke-width="0.8"/><path d="M1876.5 232.5 H1927.7" stroke="#999" stroke-width="0.8"/><rect x="1905" y="225.5" width="28.8" height="24.9" fill="#fff" stroke="#777" stroke-width="1"/><text x="1911" y="247" font-family="Liberation Sans" font-size="24" fill="#222">≠</text><polygon points="1943.0,217.89999999999998 1953.0,217.89999999999998 1948,225.5" fill="#666"/></svg>
<div style="top:262.50px;font-size:21px;line-height:23.46px;color:#000;font-weight:400;letter-spacing:0.74px;left:1857.90px;">Conditional</div>
<div style="top:286.60px;font-size:21px;line-height:23.46px;color:#000;font-weight:400;letter-spacing:0.84px;left:1860.00px;">Formatting</div>
<svg style="left:1985px;top:195px;overflow:visible" width="87" height="60" viewBox="1985 195 87 60"><rect x="1989.5" y="199.8" width="51.5" height="44" fill="#fff" stroke="#777" stroke-width="1"/><rect x="2003" y="210" width="38" height="34" fill="#d6e6f7"/><path d="M2002.5 199.8 V243.8" stroke="#999" stroke-width="0.8"/><path d="M2014.5 199.8 V243.8" stroke="#999" stroke-width="0.8"/><path d="M2027 199.8 V243.8" stroke="#999" stroke-width="0.8"/><path d="M1989.5 210 H2041" stroke="#999" stroke-width="0.8"/><path d="M1989.5 221 H2041" stroke="#999" stroke-width="0.8"/><path d="M1989.5 232.5 H2041" stroke="#999" stroke-width="0.8"/><path d="M2019 233 L2045 203 Q2050 199 2052 204 L2027 238 Z" fill="#eaeaea" stroke="#999" stroke-width="1"/><ellipse cx="2021" cy="239" rx="9" ry="8" fill="#d9a85a" stroke="#b08040" stroke-width="1"/><path d="M2006 250 Q2014 238 2018 241 Q2024 246 2024 246 Q2016 254 2006 250 Z" fill="#2f7fe0"/><polygon points="2058.0,217.89999999999998 2068.0,217.89999999999998 2063,225.5" fill="#666"/></svg>
<div style="top:262.50px;font-size:21px;line-height:23.46px;color:#000;font-weight:400;letter-spacing:0.65px;left:1992.00px;">Format</div>
<div style="top:286.60px;font-size:21px;line-height:23.46px;color:#000;font-weight:400;letter-spacing:0.44px;left:1987.00px;">as Table</div>
<svg style="left:2087px;top:195px;overflow:visible" width="88" height="60" viewBox="2087 195 88 60"><rect x="2091.5" y="199.8" width="51.5" height="44" fill="#fff" stroke="#777" stroke-width="1"/><rect x="2101" y="209" width="32" height="25" fill="#d6e6f7" stroke="#9ab" stroke-width="0.8"/><path d="M2101 199.8 V243.8 M2133 199.8 V243.8 M2091.5 209 H2143 M2091.5 234 H2143" stroke="#999" stroke-width="0.8"/><path d="M2121 233 L2147 203 Q2152 199 2154 204 L2129 238 Z" fill="#eaeaea" stroke="#999" stroke-width="1"/><ellipse cx="2123" cy="239" rx="9" ry="8" fill="#d9a85a" stroke="#b08040" stroke-width="1"/><path d="M2108 250 Q2116 238 2120 241 Q2126 246 2126 246 Q2118 254 2108 250 Z" fill="#2f7fe0"/><polygon points="2160.0,217.89999999999998 2170.0,217.89999999999998 2165,225.5" fill="#666"/></svg>
<div style="top:262.50px;font-size:21px;line-height:23.46px;color:#000;font-weight:400;letter-spacing:0.12px;left:2112.40px;">Cell</div>
<div style="top:286.60px;font-size:21px;line-height:23.46px;color:#000;font-weight:400;letter-spacing:0.51px;left:2100.80px;">Styles</div>
<svg style="left:2215px;top:195px;overflow:visible" width="90" height="55" viewBox="2215 195 90 55"><rect x="2239.3" y="197.4" width="31.4" height="10.6" fill="#fff" stroke="#666" stroke-width="1" rx="1"/><path d="M2254.7 197.4 V208" stroke="#aaa" stroke-width="1"/><rect x="2239.3" y="223.5" width="31.4" height="22.8" fill="#fff" stroke="#666" stroke-width="1" rx="1"/><path d="M2254.7 223.5 V246.3 M2239.3 234.3 H2270.7" stroke="#aaa" stroke-width="1"/><rect x="2242" y="208" width="37.7" height="15.8" rx="2.5" fill="#5fa35c" stroke="#4e8e4b" stroke-width="1"/><path d="M2261 208 V223.8" stroke="#4e8e4b" stroke-width="1"/><path d="M2218 216 L2230 204 V210.5 H2237.8 V221.5 H2230 V227.6 Z" fill="#5fa35c" stroke="#4e8e4b" stroke-width="1" stroke-linejoin="round"/><polygon points="2292.0,218.3 2302.0,218.3 2297,225.3" fill="#666"/></svg>
<div style="top:263.10px;font-size:21px;line-height:23.46px;color:#000;font-weight:400;letter-spacing:0.7px;left:2231.00px;">Insert</div>
<svg style="left:2320px;top:195px;overflow:visible" width="90" height="55" viewBox="2320 195 90 55"><rect x="2333" y="197.4" width="31.6" height="10.6" fill="#fff" stroke="#666" stroke-width="1" rx="1"/><path d="M2348.5 197.4 V208" stroke="#aaa" stroke-width="1"/><rect x="2333" y="223.5" width="31.6" height="22.8" fill="#fff" stroke="#666" stroke-width="1" rx="1"/><path d="M2348.5 223.5 V246.3 M2333 234.3 H2364.6" stroke="#aaa" stroke-width="1"/><rect x="2324" y="208" width="38" height="15.8" rx="2.5" fill="#d45354" stroke="#b94142" stroke-width="1"/><path d="M2343 208 V223.8" stroke="#b94142" stroke-width="1"/><path d="M2370 210 L2382.5 222 M2382.5 210 L2370 222" stroke="#d45354" stroke-width="3.6" stroke-linecap="round"/><polygon points="2396.0,218.3 2406.0,218.3 2401,225.3" fill="#666"/></svg>
<div style="top:263.10px;font-size:21px;line-height:23.46px;color:#000;font-weight:400;letter-spacing:0.32px;left:2331.30px;">Delete</div>
<svg style="left:2425px;top:190px;overflow:visible" width="85" height="62" viewBox="2425 190 85 62"><rect x="2429.7" y="209.7" width="54.6" height="38.6" fill="#fff" stroke="#666" stroke-width="1"/><path d="M2440.6 209.7 V248.3 M2456.6 209.7 V248.3 M2472.6 209.7 V248.3 M2429.7 220.5 H2484.3 M2429.7 237.3 H2484.3" stroke="#aaa" stroke-width="0.8"/><rect x="2440" y="220" width="17" height="17" rx="2.5" fill="#4a8fd9" stroke="#3b7cc4" stroke-width="1"/><rect x="2429" y="193" width="3" height="13" rx="1" fill="#3d85d4"/><rect x="2473" y="193" width="3" height="13" rx="1" fill="#3d85d4"/><path d="M2441 199.5 H2463" stroke="#3d85d4" stroke-width="3"/><polygon points="2436,199.5 2444,193 2444,206" fill="#3d85d4"/><polygon points="2468,199.5 2460,193 2460,206" fill="#3d85d4"/><polygon points="2496.0,218.3 2506.0,218.3 2501,225.3" fill="#666"/></svg>
<div style="top:263.10px;font-size:21px;line-height:23.46px;color:#000;font-weight:400;letter-spacing:0.55px;left:2431.00px;">Format</div>
<svg style="left:2560px;top:182px;overflow:visible" width="35" height="36" viewBox="2560 182 35 36"><path d="M2564 184 H2589.8 V190 H2573 L2583 200 L2573 210 H2589.8 V216 H2564 V210 L2575 200 L2564 189 Z" fill="#6e6e6e"/></svg>
<div style="top:188.59px;font-size:21px;line-height:23.46px;color:#000;font-weight:400;letter-spacing:0.43px;left:2603.00px;">AutoSum</div>
<svg style="left:2700px;top:194px;overflow:visible" width="20" height="12" viewBox="2700 194 20 12"><polygon points="2704.8,196.3 2714.8,196.3 2709.8,203.3" fill="#666"/></svg>
<svg style="left:2560px;top:229px;overflow:visible" width="32" height="34" viewBox="2560 229 32 34"><rect x="2563.5" y="231.8" width="24.5" height="28.5" fill="#fff" stroke="#777" stroke-width="1"/><rect x="2564" y="232.3" width="23.5" height="5" fill="#bdbdbd"/><path d="M2572 242 H2580 V248 H2584 L2576 256 L2568 248 H2572 Z" fill="#3d85d4"/></svg>
<div style="top:234.19px;font-size:21px;line-height:23.46px;color:#000;font-weight:400;letter-spacing:-0.32px;left:2603.00px;">Fill</div>
<svg style="left:2632px;top:240px;overflow:visible" width="20" height="12" viewBox="2632 240 20 12"><polygon points="2637.3,242.0 2647.3,242.0 2642.3,249.0" fill="#666"/></svg>
<svg style="left:2556px;top:272px;overflow:visible" width="40" height="38" viewBox="2556 272 40 38"><path d="M2561 298 L2582 277 L2592 285 L2571 306 Z" fill="#e891a4" stroke="#b84e66" stroke-width="1.2"/><path d="M2561 298 L2568 291 L2578 299 L2571 306 Z" fill="#f4c4cf"/><path d="M2568 291 L2589 270" stroke="#b84e66" stroke-width="0"/></svg>
<div style="top:280.80px;font-size:21px;line-height:23.46px;color:#000;font-weight:400;letter-spacing:0.13px;left:2603.00px;">Clear</div>
<svg style="left:2656px;top:286px;overflow:visible" width="20" height="12" viewBox="2656 286 20 12"><polygon points="2661.2,288.3 2671.2,288.3 2666.2,295.3" fill="#666"/></svg>
<div style="top:191.85px;font-size:30px;line-height:33.51px;color:#2f86e0;font-weight:400;left:2740.50px;-webkit-text-stroke:1.6px #2f86e0;">A</div>
<div style="top:218.65px;font-size:30px;line-height:33.51px;color:#6e6e6e;font-weight:400;left:2742.60px;-webkit-text-stroke:0.7px #6e6e6e;">Z</div>
<svg style="left:2762px;top:202px;overflow:visible" width="60" height="42" viewBox="2762 202 60 42"><path d="M2765.5 210 Q2765.5 204.5 2783 204.5 Q2800.5 204.5 2800.5 210 L2787 225 V239 Q2783 243 2779 239 V225 Z" fill="#7d7d7d"/><ellipse cx="2783" cy="209.5" rx="15" ry="4.5" fill="#e2e2e2"/><polygon points="2807.0,217.89999999999998 2817.0,217.89999999999998 2812,225.5" fill="#666"/></svg>
<div style="top:262.50px;font-size:21px;line-height:23.46px;color:#000;font-weight:400;letter-spacing:0.76px;left:2746.00px;">Sort &amp;</div>
<div style="top:286.60px;font-size:21px;line-height:23.46px;color:#000;font-weight:400;letter-spacing:0.6px;left:2752.00px;">Filter</div>
<svg style="left:255px;top:325px;overflow:visible" width="21" height="38" viewBox="255 325 21 38"><polygon points="258.1,338.0 272.1,338.0 265.1,327.4" fill="#666"/><polygon points="258.1,349.29999999999995 272.1,349.29999999999995 265.1,360.5" fill="#666"/></svg>
<svg style="left:309px;top:332px;overflow:visible" width="29" height="27" viewBox="309 332 29 27"><path d="M313 336 L333 355 M333 336 L313 355" stroke="#c9c9c9" stroke-width="3.6"/></svg>
<svg style="left:365px;top:332px;overflow:visible" width="34" height="27" viewBox="365 332 34 27"><path d="M369 345 L378 353 L395 336" stroke="#c9c9c9" stroke-width="3.6" fill="none"/></svg>
<div style="left:429px;top:324px;font-size:35px;line-height:38px;font-family:'Liberation Serif',serif;font-style:italic;color:#333;">fx</div>
<div style="left:472px;top:330px;width:1.5px;height:29px;background:#dcdcdc;"></div>
<svg style="left:2890px;top:336px;overflow:visible" width="22" height="16" viewBox="2890 336 22 16"><polygon points="2894.0,338.84999999999997 2908.0,338.84999999999997 2901,349.55" fill="#666"/></svg>
</div></body></html>
